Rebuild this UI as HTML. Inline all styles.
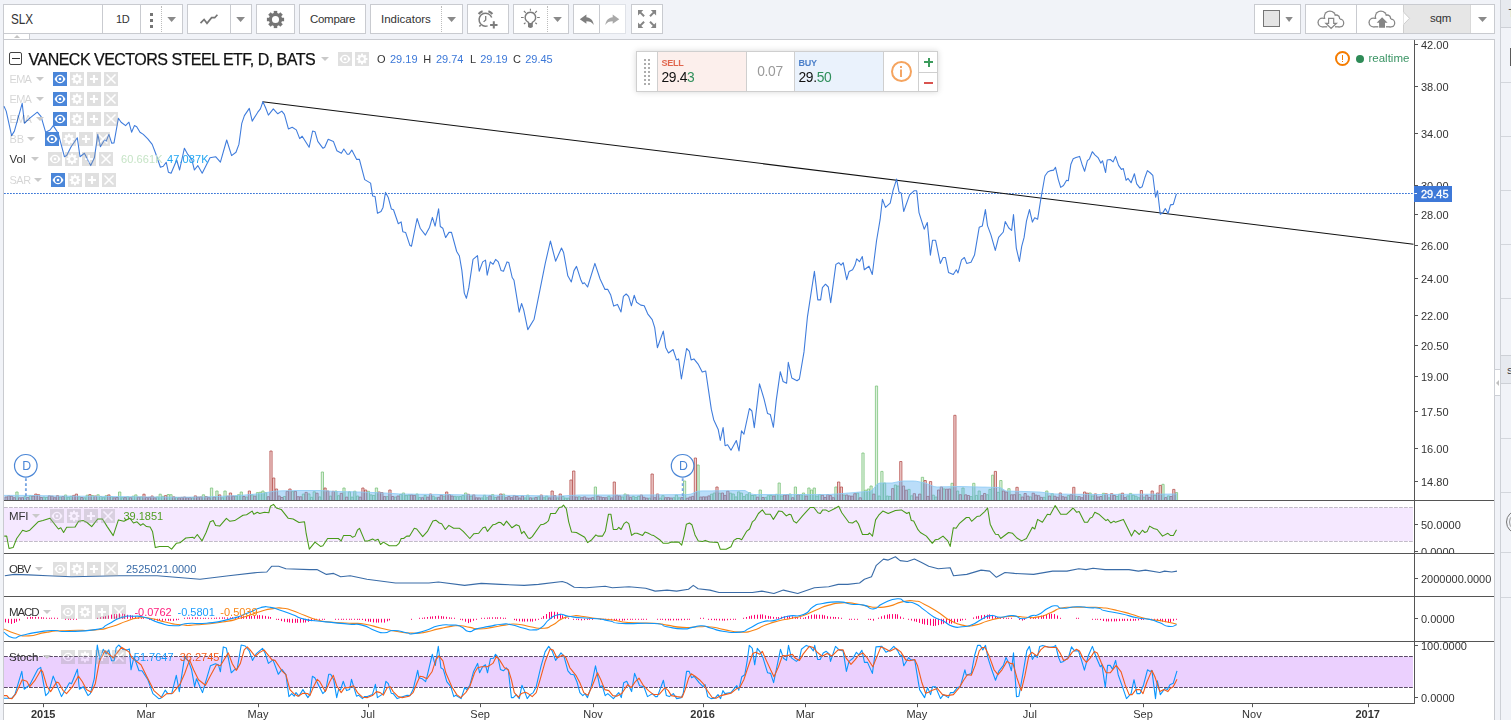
<!DOCTYPE html><html><head><meta charset="utf-8"><title>SLX</title><style>
*{box-sizing:border-box;margin:0;padding:0}
html,body{width:1511px;height:720px;overflow:hidden;background:#f1f3f8;font-family:"Liberation Sans",sans-serif;color:#333}
#root{position:relative;width:1511px;height:720px;overflow:hidden;background:#f1f3f8}
.abs{position:absolute}
.grp{position:absolute;top:4px;height:30px;background:#fff;border:1px solid #c9cbd0}
.sep{position:absolute;top:0;width:1px;height:28px;background:#c9cbd0}
.dsep{position:absolute;top:1px;width:0;height:26px;border-left:1px dotted #bcbcbc}
.tri{position:absolute;width:0;height:0;border-left:4.5px solid transparent;border-right:4.5px solid transparent;border-top:5px solid #8a8a8a}
.tb{position:absolute;font-size:11.5px;color:#333;line-height:28px;top:0;white-space:nowrap}
.lg{position:absolute;font-size:11px;color:#d4d4d4;white-space:nowrap;line-height:14px}
.lb{position:absolute;width:14px;height:14px;background:#999;opacity:.3}
.lb.on{background:#4a86d9;opacity:1}
.ltri{position:absolute;width:0;height:0;border-left:4px solid transparent;border-right:4px solid transparent;border-top:4.5px solid #d4d4d4}
svg{position:absolute;left:0;top:0;overflow:visible}
</style></head><body><div id="root"><div class="grp" style="left:3px;width:180px"><div class="tb" style="left:7px;font-size:14.300px;transform:scaleX(.82);transform-origin:0 50%">SLX</div><div class="sep" style="left:98px"></div><div class="tb" style="left:112px;font-size:11px;letter-spacing:-0.400px">1D</div><div class="sep" style="left:136px"></div><div class="abs" style="left:146px;top:7.500px;width:3px;height:3px;background:#757575;box-shadow:0 6px 0 #757575,0 12px 0 #757575"></div><div class="dsep" style="left:157px"></div></div><div class="grp" style="left:187px;width:65px"><div class="sep" style="left:42px"></div></div><div class="grp" style="left:256px;width:39px"></div><div class="grp" style="left:299px;width:67px"><div class="tb" style="left:10px;letter-spacing:-0.300px">Compare</div></div><div class="grp" style="left:370px;width:93px"><div class="tb" style="left:10px">Indicators</div><div class="dsep" style="left:70px"></div></div><div class="grp" style="left:467px;width:42px"></div><div class="grp" style="left:513px;width:56px"><div class="dsep" style="left:33px"></div></div><div class="grp" style="left:573px;width:27px;border-right:none"></div><div class="grp" style="left:599px;width:27px;border-color:#dfe2e8;border-left-color:#c9cbd0"></div><div class="grp" style="left:631px;width:32px"></div><div class="grp" style="left:1254px;width:47px"><div class="abs" style="left:8px;top:5px;width:17px;height:17px;background:#e4e4e4;border:1px solid #757575"></div></div><div class="grp" style="left:1305px;width:190px"><div class="sep" style="left:50px"></div><div class="abs" style="left:97px;top:0;width:68px;height:28px;background:#e6e6e6"></div><div class="tb" style="left:124px;top:-1px;font-size:11.500px;letter-spacing:-0.200px">sqm</div><div class="sep" style="left:164px;background:#d9d9d9"></div></div><svg width="1511" height="40" viewBox="0 0 1511 40"><path d="M200.500 23.100L204.100 19.500L207 23.300L211.600 17.700H214.700L217.400 14.700" fill="none" stroke="#757575" stroke-width="1.700"/><g transform="translate(275.500 19.500)"><g fill="#757575"><rect x="-1.750" y="-8.600" width="3.500" height="4" transform="rotate(0)"/><rect x="-1.750" y="-8.600" width="3.500" height="4" transform="rotate(45)"/><rect x="-1.750" y="-8.600" width="3.500" height="4" transform="rotate(90)"/><rect x="-1.750" y="-8.600" width="3.500" height="4" transform="rotate(135)"/><rect x="-1.750" y="-8.600" width="3.500" height="4" transform="rotate(180)"/><rect x="-1.750" y="-8.600" width="3.500" height="4" transform="rotate(225)"/><rect x="-1.750" y="-8.600" width="3.500" height="4" transform="rotate(270)"/><rect x="-1.750" y="-8.600" width="3.500" height="4" transform="rotate(315)"/></g><circle r="5.100" fill="none" stroke="#757575" stroke-width="3.100"/></g><g fill="none" stroke="#7c7c7c"><path d="M487.600 25.900A6.500 6.500 0 1 1 491.700 17.600" stroke-width="1.500"/><path d="M478.600 14A9 9 0 0 1 482.600 11.300M488.400 11.300A9 9 0 0 1 492.400 14" stroke-width="2.100"/><path d="M485.700 16V19.900L483.600 21.900" stroke-width="1.300"/><path d="M480.700 24.900L479.400 26.400" stroke-width="1.500"/><path d="M493.800 21.300V28.600M490.100 24.900H497.500" stroke-width="2"/></g><g fill="none" stroke="#7c7c7c"><path d="M528.500 23.600V22.400A5.300 5.300 0 1 1 532.300 22.400V23.600" stroke-width="1.500"/><path d="M530.400 8.800V10.800M523.900 11L525.800 12.900M536.900 11L535 12.900M521 17.500H523.700M537.100 17.500H539.800M523.900 24L525.500 22.700M536.900 24L535.300 22.700" stroke-width="1.100"/></g><path d="M528 23.100H532.800V26.200Q532.800 27.900 530.400 27.900Q528 27.900 528 26.200Z" fill="#7c7c7c"/><path d="M579.800 19.200L586.400 14.600V17.300C590.500 17.600 593.200 20.500 593.700 25C592 22.300 589.800 21.300 586.400 21.300V23.800Z" fill="#7f7f7f"/><path d="M619.300 19.200L612.700 14.600V17.300C608.600 17.600 605.900 20.500 605.400 25C607.100 22.300 609.300 21.300 612.700 21.300V23.800Z" fill="#a9a9a9"/><g fill="#858585" stroke="#858585"><path d="M639.500 11.600L644.100 16.200M654.600 11.600L650 16.200M639.500 26.400L644.100 21.800M654.600 26.400L650 21.800" stroke-width="2" fill="none"/><path d="M638 10.100h5.300l-5.300 5.300zM656.100 10.100h-5.300l5.300 5.300zM638 27.900h5.300l-5.300-5.300zM656.100 27.900h-5.300l5.300-5.300z" stroke="none"/></g><g fill="#878787"><circle cx="1322.4" cy="22.5" r="4.95"/><circle cx="1329.9" cy="16.7" r="6.25"/><circle cx="1336.0" cy="18.6" r="4.25"/><circle cx="1339.8" cy="23.0" r="4.55"/><rect x="1322.4" y="19" width="17.400" height="8.45"/></g><g fill="#fff"><circle cx="1322.4" cy="22.5" r="3.65"/><circle cx="1329.9" cy="16.7" r="4.95"/><circle cx="1336.0" cy="18.6" r="2.95"/><circle cx="1339.8" cy="23.0" r="3.25"/><rect x="1322.4" y="19" width="17.400" height="7.15"/></g><rect x="1327.2" y="25.500" width="7.8" height="2.500" fill="#fff"/><path d="M1328.600 18.400H1333.700V23.300H1336.500L1331.100 28.400L1325.800 23.300H1328.600Z" fill="#fff" stroke="#878787" stroke-width="1.200"/><g fill="#878787"><circle cx="1373.4" cy="22.5" r="4.95"/><circle cx="1380.9" cy="16.7" r="6.25"/><circle cx="1387.0" cy="18.6" r="4.25"/><circle cx="1390.8" cy="23.0" r="4.55"/><rect x="1373.4" y="19" width="17.400" height="8.45"/></g><g fill="#fff"><circle cx="1373.4" cy="22.5" r="3.65"/><circle cx="1380.9" cy="16.7" r="4.95"/><circle cx="1387.0" cy="18.6" r="2.95"/><circle cx="1390.8" cy="23.0" r="3.25"/><rect x="1373.4" y="19" width="17.400" height="7.15"/></g><rect x="1378.3" y="25.500" width="7.7" height="2.500" fill="#fff"/><path d="M1382.100 17.200L1387.600 22.800H1385V27.700H1379.100V22.800H1376.600Z" fill="#858585"/><path d="M167.3 17.100H176L171.65 22Z" fill="#8a8a8a"/><path d="M236.2 17.100H245L240.60 22Z" fill="#8a8a8a"/><path d="M447.2 17.100H456L451.60 22Z" fill="#8a8a8a"/><path d="M553.2 17.100H561.9L557.55 22Z" fill="#8a8a8a"/><path d="M1285.4 17.100H1292.8L1289.10 22Z" fill="#8a8a8a"/><path d="M1478 17.100H1487L1482.50 22Z" fill="#8a8a8a"/><path d="M1403 5V12L1409.500 18.300L1403 24.600V33H1404V5Z" fill="#fff"/><path d="M1403.500 5V12L1409.500 18.300L1403.500 24.600V33" fill="none" stroke="#cfcfcf" stroke-width="1"/></svg><div class="abs" style="left:3px;top:34px;width:27px;height:6px;background:#fff;border:1px solid #c9cbd0;border-top:none"></div><div class="abs" style="left:13.500px;top:35px;width:0;height:0;border-left:3px solid transparent;border-right:3px solid transparent;border-bottom:3px solid #c4c4c4"></div><div class="abs" style="left:3px;top:39px;width:1492px;height:690px;background:#fff;border:1px solid #c9cbd0"></div><div class="abs" style="left:1500px;top:0;width:11px;height:720px;border-left:1px solid #cdd0d6;background:#f1f3f8"></div><div class="abs" style="left:1501px;top:0;width:10px;height:27.500px;background:#e7eaef;border-bottom:1px solid #cdd0d6"></div><div class="abs" style="left:1508.500px;top:6px;font-size:11px;color:#333;line-height:14px">T</div><div class="abs" style="left:1509.500px;top:48px;width:2px;height:17.500px;background:#5a5a5a"></div><div class="abs" style="left:1501px;top:82px;width:10px;height:1px;background:#d3d6dc"></div><div class="abs" style="left:1501px;top:136px;width:10px;height:1px;background:#d3d6dc"></div><div class="abs" style="left:1501px;top:190px;width:10px;height:1px;background:#d3d6dc"></div><div class="abs" style="left:1501px;top:244px;width:10px;height:1px;background:#d3d6dc"></div><div class="abs" style="left:1501px;top:298px;width:10px;height:1px;background:#d3d6dc"></div><div class="abs" style="left:1501px;top:438px;width:10px;height:1px;background:#d3d6dc"></div><div class="abs" style="left:1501px;top:492px;width:10px;height:1px;background:#d3d6dc"></div><div class="abs" style="left:1501px;top:552px;width:10px;height:1px;background:#d3d6dc"></div><div class="abs" style="left:1501px;top:597px;width:10px;height:1px;background:#d3d6dc"></div><div class="abs" style="left:1501px;top:355px;width:10px;height:29px;background:#e6e9ef;border-top:1px solid #cdd0d6;border-bottom:1px solid #cdd0d6"></div><div class="abs" style="left:1507px;top:364px;font-size:9px;color:#333;line-height:14px">S</div><div class="abs" style="left:1506px;top:510px;width:24px;height:24px;border:1.500px solid #777;border-radius:50%"></div><div class="abs" style="left:1509px;top:513px;width:18px;height:18px;border:1px solid #999;border-radius:50%"></div><div class="abs" style="left:1494px;top:369px;width:7px;height:27px;background:#fff;border:1px solid #cdd0d6"></div><div class="abs" style="left:1496px;top:379.500px;width:0;height:0;border-top:3px solid transparent;border-bottom:3px solid transparent;border-right:3px solid #c0c0c0"></div><svg width="1511" height="720" viewBox="0 0 1511 720" style="will-change:transform"><rect x="4" y="508" width="1409" height="33" fill="#f5e8ff"/>
<path d="M4 507.5H1413M4 541.5H1413" stroke="#c3bcc9" stroke-width="1" stroke-dasharray="3.8 1.2" fill="none"/>
<rect x="4" y="657" width="1409" height="30" fill="#ebd0fe"/>
<path d="M4 656.5H1413M4 687.5H1413" stroke="#5a4a66" stroke-width="1" stroke-dasharray="3.8 1.2" fill="none"/>
<path d="M15.8 500.0V492.0H18.1V500.0M23.9 500.0V496.7H26.2V500.0M29.3 500.0V495.8H31.6V500.0M42.8 500.0V497.1H45.1V500.0M45.5 500.0V497.5H47.8V500.0M59.1 500.0V497.0H61.3V500.0M64.5 500.0V495.0H66.7V500.0M67.2 500.0V497.3H69.4V500.0M69.9 500.0V496.3H72.1V500.0M78.0 500.0V496.7H80.2V500.0M83.4 500.0V497.8H85.6V500.0M86.1 500.0V495.2H88.3V500.0M91.5 500.0V495.5H93.7V500.0M96.9 500.0V494.8H99.2V500.0M99.6 500.0V496.5H101.9V500.0M102.3 500.0V497.7H104.6V500.0M105.0 500.0V495.7H107.3V500.0M110.4 500.0V496.8H112.7V500.0M118.5 500.0V492.0H120.8V500.0M121.2 500.0V497.7H123.5V500.0M126.6 500.0V496.8H128.9V500.0M132.0 500.0V496.2H134.3V500.0M134.7 500.0V494.9H137.0V500.0M140.2 500.0V496.9H142.4V500.0M156.4 500.0V496.9H158.6V500.0M159.1 500.0V494.2H161.3V500.0M161.8 500.0V496.3H164.0V500.0M167.2 500.0V494.5H169.4V500.0M169.9 500.0V494.7H172.1V500.0M175.3 500.0V497.6H177.5V500.0M191.5 500.0V497.8H193.8V500.0M202.3 500.0V494.8H204.6V500.0M210.4 500.0V488.0H212.7V500.0M215.8 500.0V491.0H218.1V500.0M221.2 500.0V497.8H223.5V500.0M223.9 500.0V491.0H226.2V500.0M234.8 500.0V496.2H237.0V500.0M237.5 500.0V494.7H239.7V500.0M240.2 500.0V492.0H242.4V500.0M245.6 500.0V497.0H247.8V500.0M251.0 500.0V494.8H253.2V500.0M256.4 500.0V492.6H258.6V500.0M259.1 500.0V492.3H261.3V500.0M261.8 500.0V491.0H264.0V500.0M264.5 500.0V492.6H266.7V500.0M283.4 500.0V496.5H285.7V500.0M291.5 500.0V491.6H293.8V500.0M302.3 500.0V494.1H304.6V500.0M307.7 500.0V493.9H310.0V500.0M310.4 500.0V497.3H312.7V500.0M313.1 500.0V491.8H315.4V500.0M318.5 500.0V496.9H320.8V500.0M321.3 500.0V472.0H323.5V500.0M329.4 500.0V496.1H331.6V500.0M334.8 500.0V491.0H337.0V500.0M337.5 500.0V495.7H339.7V500.0M342.9 500.0V488.0H345.1V500.0M348.3 500.0V491.8H350.5V500.0M351.0 500.0V497.1H353.2V500.0M353.7 500.0V491.2H355.9V500.0M356.4 500.0V496.0H358.6V500.0M367.2 500.0V491.3H369.5V500.0M369.9 500.0V494.9H372.2V500.0M372.6 500.0V495.5H374.9V500.0M375.3 500.0V488.0H377.6V500.0M386.1 500.0V496.6H388.4V500.0M394.2 500.0V497.1H396.5V500.0M399.6 500.0V494.4H401.9V500.0M402.3 500.0V493.0H404.6V500.0M405.0 500.0V495.6H407.3V500.0M407.7 500.0V495.0H410.0V500.0M415.9 500.0V494.0H418.1V500.0M418.6 500.0V497.5H420.8V500.0M424.0 500.0V495.4H426.2V500.0M432.1 500.0V496.2H434.3V500.0M434.8 500.0V497.8H437.0V500.0M442.9 500.0V496.2H445.1V500.0M453.7 500.0V496.4H455.9V500.0M456.4 500.0V496.7H458.7V500.0M459.1 500.0V496.6H461.4V500.0M461.8 500.0V495.6H464.1V500.0M464.5 500.0V493.0H466.8V500.0M469.9 500.0V496.2H472.2V500.0M480.7 500.0V497.9H483.0V500.0M483.4 500.0V495.2H485.7V500.0M486.1 500.0V497.7H488.4V500.0M491.5 500.0V494.6H493.8V500.0M494.2 500.0V497.5H496.5V500.0M502.4 500.0V494.1H504.6V500.0M524.0 500.0V497.9H526.2V500.0M526.7 500.0V495.1H528.9V500.0M532.1 500.0V498.0H534.3V500.0M537.5 500.0V496.8H539.7V500.0M542.9 500.0V497.7H545.1V500.0M545.6 500.0V496.2H547.9V500.0M556.4 500.0V497.9H558.7V500.0M561.8 500.0V496.5H564.1V500.0M564.5 500.0V498.1H566.8V500.0M567.2 500.0V498.1H569.5V500.0M578.0 500.0V496.8H580.3V500.0M594.3 500.0V487.0H596.5V500.0M607.8 500.0V496.1H610.0V500.0M621.3 500.0V497.0H623.5V500.0M624.0 500.0V494.0H626.2V500.0M632.1 500.0V496.3H634.3V500.0M634.8 500.0V497.5H637.0V500.0M637.5 500.0V496.2H639.8V500.0M648.3 500.0V498.1H650.6V500.0M659.1 500.0V498.1H661.4V500.0M661.8 500.0V495.6H664.1V500.0M672.6 500.0V497.7H674.9V500.0M675.3 500.0V495.1H677.6V500.0M678.0 500.0V497.8H680.3V500.0M683.5 500.0V481.0H685.7V500.0M697.0 500.0V465.0H699.2V500.0M710.5 500.0V494.2H712.7V500.0M713.2 500.0V493.0H715.4V500.0M718.6 500.0V493.2H720.8V500.0M729.4 500.0V493.2H731.7V500.0M732.1 500.0V494.0H734.4V500.0M734.8 500.0V496.9H737.1V500.0M737.5 500.0V491.9H739.8V500.0M740.2 500.0V493.1H742.5V500.0M742.9 500.0V496.6H745.2V500.0M745.6 500.0V494.7H747.9V500.0M748.3 500.0V492.6H750.6V500.0M751.0 500.0V495.5H753.3V500.0M753.7 500.0V495.0H756.0V500.0M759.1 500.0V490.0H761.4V500.0M764.5 500.0V497.6H766.8V500.0M767.2 500.0V495.7H769.5V500.0M769.9 500.0V495.3H772.2V500.0M775.4 500.0V494.3H777.6V500.0M778.1 500.0V483.0H780.3V500.0M780.8 500.0V496.0H783.0V500.0M788.9 500.0V494.0H791.1V500.0M794.3 500.0V487.0H796.5V500.0M799.7 500.0V494.7H801.9V500.0M802.4 500.0V493.0H804.6V500.0M807.8 500.0V488.0H810.0V500.0M810.5 500.0V490.0H812.7V500.0M813.2 500.0V488.0H815.4V500.0M815.9 500.0V496.1H818.1V500.0M818.6 500.0V494.5H820.9V500.0M834.8 500.0V487.0H837.1V500.0M842.9 500.0V495.0H845.2V500.0M856.4 500.0V493.1H858.7V500.0M861.9 500.0V453.0H864.1V500.0M864.6 500.0V490.2H866.8V500.0M867.3 500.0V489.0H869.5V500.0M870.0 500.0V486.0H872.2V500.0M875.4 500.0V386.0H877.6V500.0M878.1 500.0V496.0H880.3V500.0M880.8 500.0V471.4H883.0V500.0M883.5 500.0V483.0H885.7V500.0M886.2 500.0V496.0H888.4V500.0M888.9 500.0V496.4H891.1V500.0M894.3 500.0V485.0H896.5V500.0M897.0 500.0V486.0H899.2V500.0M907.8 500.0V489.4H910.1V500.0M910.5 500.0V495.8H912.8V500.0M921.3 500.0V477.3H923.6V500.0M932.1 500.0V495.2H934.4V500.0M934.8 500.0V497.0H937.1V500.0M942.9 500.0V488.9H945.2V500.0M951.0 500.0V483.3H953.3V500.0M956.5 500.0V491.0H958.7V500.0M961.9 500.0V488.0H964.1V500.0M970.0 500.0V496.6H972.2V500.0M972.7 500.0V483.3H974.9V500.0M975.4 500.0V495.4H977.6V500.0M978.1 500.0V491.0H980.3V500.0M986.2 500.0V494.7H988.4V500.0M988.9 500.0V489.4H991.1V500.0M991.6 500.0V475.2H993.8V500.0M997.0 500.0V492.3H999.3V500.0M999.7 500.0V480.5H1002.0V500.0M1007.8 500.0V488.7H1010.1V500.0M1018.6 500.0V494.6H1020.9V500.0M1029.4 500.0V496.9H1031.7V500.0M1043.0 500.0V497.3H1045.2V500.0M1045.7 500.0V491.0H1047.9V500.0M1051.1 500.0V493.6H1053.3V500.0M1067.3 500.0V495.6H1069.5V500.0M1075.4 500.0V496.4H1077.6V500.0M1088.9 500.0V493.0H1091.2V500.0M1091.6 500.0V496.0H1093.9V500.0M1102.4 500.0V493.3H1104.7V500.0M1107.8 500.0V497.8H1110.1V500.0M1115.9 500.0V496.5H1118.2V500.0M1118.6 500.0V494.1H1120.9V500.0M1126.7 500.0V495.9H1129.0V500.0M1129.4 500.0V493.4H1131.7V500.0M1132.2 500.0V495.2H1134.4V500.0M1134.9 500.0V496.2H1137.1V500.0M1137.6 500.0V497.7H1139.8V500.0M1143.0 500.0V497.2H1145.2V500.0M1153.8 500.0V495.3H1156.0V500.0M1161.9 500.0V484.3H1164.1V500.0M1167.3 500.0V495.9H1169.5V500.0M1175.4 500.0V492.6H1177.6V500.0" fill="#def0de" stroke="#7cc47c" stroke-width="0.8"/>
<path d="M5.0 500.0V497.0H7.2V500.0M7.7 500.0V495.7H10.0V500.0M10.4 500.0V496.2H12.7V500.0M13.1 500.0V497.7H15.4V500.0M18.5 500.0V497.8H20.8V500.0M21.2 500.0V497.7H23.5V500.0M26.6 500.0V497.6H28.9V500.0M32.0 500.0V496.0H34.3V500.0M34.7 500.0V494.1H37.0V500.0M37.4 500.0V494.7H39.7V500.0M40.1 500.0V497.5H42.4V500.0M48.2 500.0V495.8H50.5V500.0M51.0 500.0V496.2H53.2V500.0M53.7 500.0V497.7H55.9V500.0M56.4 500.0V495.6H58.6V500.0M61.8 500.0V496.5H64.0V500.0M72.6 500.0V495.4H74.8V500.0M75.3 500.0V494.1H77.5V500.0M80.7 500.0V497.5H82.9V500.0M88.8 500.0V494.6H91.0V500.0M94.2 500.0V496.0H96.4V500.0M107.7 500.0V494.9H110.0V500.0M113.1 500.0V497.8H115.4V500.0M115.8 500.0V497.5H118.1V500.0M123.9 500.0V497.6H126.2V500.0M129.3 500.0V497.7H131.6V500.0M137.4 500.0V497.2H139.7V500.0M142.9 500.0V494.2H145.1V500.0M145.6 500.0V497.5H147.8V500.0M148.3 500.0V497.3H150.5V500.0M151.0 500.0V496.0H153.2V500.0M153.7 500.0V497.8H155.9V500.0M164.5 500.0V495.6H166.7V500.0M172.6 500.0V496.8H174.8V500.0M178.0 500.0V497.7H180.2V500.0M180.7 500.0V497.4H182.9V500.0M183.4 500.0V497.0H185.6V500.0M186.1 500.0V497.8H188.4V500.0M188.8 500.0V497.6H191.1V500.0M194.2 500.0V495.9H196.5V500.0M196.9 500.0V497.2H199.2V500.0M199.6 500.0V496.9H201.9V500.0M205.0 500.0V496.5H207.3V500.0M207.7 500.0V497.7H210.0V500.0M213.1 500.0V497.0H215.4V500.0M218.5 500.0V494.9H220.8V500.0M226.6 500.0V496.2H228.9V500.0M229.3 500.0V493.0H231.6V500.0M232.1 500.0V496.2H234.3V500.0M242.9 500.0V496.5H245.1V500.0M248.3 500.0V491.0H250.5V500.0M253.7 500.0V496.1H255.9V500.0M267.2 500.0V496.7H269.4V500.0M269.9 500.0V451.0H272.1V500.0M272.6 500.0V478.0H274.8V500.0M275.3 500.0V489.0H277.6V500.0M278.0 500.0V496.0H280.3V500.0M280.7 500.0V497.5H283.0V500.0M286.1 500.0V491.4H288.4V500.0M288.8 500.0V489.0H291.1V500.0M294.2 500.0V491.4H296.5V500.0M296.9 500.0V496.7H299.2V500.0M299.6 500.0V496.8H301.9V500.0M305.0 500.0V492.4H307.3V500.0M315.8 500.0V493.2H318.1V500.0M324.0 500.0V488.0H326.2V500.0M326.7 500.0V491.0H328.9V500.0M332.1 500.0V491.3H334.3V500.0M340.2 500.0V493.4H342.4V500.0M345.6 500.0V497.1H347.8V500.0M359.1 500.0V497.1H361.3V500.0M361.8 500.0V488.0H364.0V500.0M364.5 500.0V490.0H366.7V500.0M378.0 500.0V492.0H380.3V500.0M380.7 500.0V492.5H383.0V500.0M383.4 500.0V496.6H385.7V500.0M388.8 500.0V490.0H391.1V500.0M391.5 500.0V496.5H393.8V500.0M396.9 500.0V496.0H399.2V500.0M410.4 500.0V494.9H412.7V500.0M413.2 500.0V495.4H415.4V500.0M421.3 500.0V497.7H423.5V500.0M426.7 500.0V497.2H428.9V500.0M429.4 500.0V494.0H431.6V500.0M437.5 500.0V497.4H439.7V500.0M440.2 500.0V495.2H442.4V500.0M445.6 500.0V492.0H447.8V500.0M448.3 500.0V494.5H450.5V500.0M451.0 500.0V496.0H453.2V500.0M467.2 500.0V494.3H469.5V500.0M472.6 500.0V494.9H474.9V500.0M475.3 500.0V497.8H477.6V500.0M478.0 500.0V497.9H480.3V500.0M488.8 500.0V495.8H491.1V500.0M496.9 500.0V496.9H499.2V500.0M499.6 500.0V494.0H501.9V500.0M505.1 500.0V497.7H507.3V500.0M507.8 500.0V496.4H510.0V500.0M510.5 500.0V497.6H512.7V500.0M513.2 500.0V495.5H515.4V500.0M515.9 500.0V496.3H518.1V500.0M518.6 500.0V498.0H520.8V500.0M521.3 500.0V495.9H523.5V500.0M529.4 500.0V497.8H531.6V500.0M534.8 500.0V497.4H537.0V500.0M540.2 500.0V495.0H542.4V500.0M548.3 500.0V497.9H550.6V500.0M551.0 500.0V491.0H553.3V500.0M553.7 500.0V495.6H556.0V500.0M559.1 500.0V494.0H561.4V500.0M569.9 500.0V480.0H572.2V500.0M572.6 500.0V471.0H574.9V500.0M575.3 500.0V497.1H577.6V500.0M580.7 500.0V497.7H583.0V500.0M583.4 500.0V496.9H585.7V500.0M586.1 500.0V498.1H588.4V500.0M588.8 500.0V498.2H591.1V500.0M591.6 500.0V497.6H593.8V500.0M597.0 500.0V496.0H599.2V500.0M599.7 500.0V497.0H601.9V500.0M602.4 500.0V497.5H604.6V500.0M605.1 500.0V497.7H607.3V500.0M610.5 500.0V497.9H612.7V500.0M613.2 500.0V482.0H615.4V500.0M615.9 500.0V495.3H618.1V500.0M618.6 500.0V495.8H620.8V500.0M626.7 500.0V495.0H628.9V500.0M629.4 500.0V497.3H631.6V500.0M640.2 500.0V495.0H642.5V500.0M642.9 500.0V497.3H645.2V500.0M645.6 500.0V498.1H647.9V500.0M651.0 500.0V474.0H653.3V500.0M653.7 500.0V497.7H656.0V500.0M656.4 500.0V494.0H658.7V500.0M664.5 500.0V497.7H666.8V500.0M667.2 500.0V497.6H669.5V500.0M669.9 500.0V498.0H672.2V500.0M680.8 500.0V497.6H683.0V500.0M686.2 500.0V498.2H688.4V500.0M688.9 500.0V497.1H691.1V500.0M691.6 500.0V496.4H693.8V500.0M694.3 500.0V458.0H696.5V500.0M699.7 500.0V497.0H701.9V500.0M702.4 500.0V496.8H704.6V500.0M705.1 500.0V496.9H707.3V500.0M707.8 500.0V495.9H710.0V500.0M715.9 500.0V487.0H718.1V500.0M721.3 500.0V493.0H723.5V500.0M724.0 500.0V495.4H726.2V500.0M726.7 500.0V491.1H729.0V500.0M756.4 500.0V497.2H758.7V500.0M761.8 500.0V497.5H764.1V500.0M772.7 500.0V496.0H774.9V500.0M783.5 500.0V495.1H785.7V500.0M786.2 500.0V494.7H788.4V500.0M791.6 500.0V497.7H793.8V500.0M797.0 500.0V494.7H799.2V500.0M805.1 500.0V496.0H807.3V500.0M821.3 500.0V495.2H823.6V500.0M824.0 500.0V497.5H826.3V500.0M826.7 500.0V494.6H829.0V500.0M829.4 500.0V495.6H831.7V500.0M832.1 500.0V497.7H834.4V500.0M837.5 500.0V482.0H839.8V500.0M840.2 500.0V487.0H842.5V500.0M845.6 500.0V495.0H847.9V500.0M848.3 500.0V495.9H850.6V500.0M851.0 500.0V496.2H853.3V500.0M853.7 500.0V493.7H856.0V500.0M859.1 500.0V497.8H861.4V500.0M872.7 500.0V494.1H874.9V500.0M891.6 500.0V488.6H893.8V500.0M899.7 500.0V461.5H901.9V500.0M902.4 500.0V486.0H904.6V500.0M905.1 500.0V490.2H907.3V500.0M913.2 500.0V493.7H915.5V500.0M915.9 500.0V497.0H918.2V500.0M918.6 500.0V494.1H920.9V500.0M924.0 500.0V480.5H926.3V500.0M926.7 500.0V496.4H929.0V500.0M929.4 500.0V481.6H931.7V500.0M937.5 500.0V490.0H939.8V500.0M940.2 500.0V487.0H942.5V500.0M945.6 500.0V489.2H947.9V500.0M948.3 500.0V489.0H950.6V500.0M953.8 500.0V415.3H956.0V500.0M959.2 500.0V494.7H961.4V500.0M964.6 500.0V494.8H966.8V500.0M967.3 500.0V495.5H969.5V500.0M980.8 500.0V495.7H983.0V500.0M983.5 500.0V493.5H985.7V500.0M994.3 500.0V471.4H996.5V500.0M1002.4 500.0V491.0H1004.7V500.0M1005.1 500.0V492.0H1007.4V500.0M1010.5 500.0V494.8H1012.8V500.0M1013.2 500.0V494.7H1015.5V500.0M1015.9 500.0V487.3H1018.2V500.0M1021.3 500.0V497.0H1023.6V500.0M1024.0 500.0V493.5H1026.3V500.0M1026.7 500.0V496.1H1029.0V500.0M1032.1 500.0V493.2H1034.4V500.0M1034.8 500.0V495.1H1037.1V500.0M1037.5 500.0V495.7H1039.8V500.0M1040.2 500.0V497.4H1042.5V500.0M1048.4 500.0V496.0H1050.6V500.0M1053.8 500.0V496.2H1056.0V500.0M1056.5 500.0V497.3H1058.7V500.0M1059.2 500.0V493.0H1061.4V500.0M1061.9 500.0V496.7H1064.1V500.0M1064.6 500.0V497.2H1066.8V500.0M1070.0 500.0V494.6H1072.2V500.0M1072.7 500.0V487.3H1074.9V500.0M1078.1 500.0V496.6H1080.3V500.0M1080.8 500.0V497.7H1083.0V500.0M1083.5 500.0V492.0H1085.7V500.0M1086.2 500.0V493.2H1088.5V500.0M1094.3 500.0V493.9H1096.6V500.0M1097.0 500.0V497.0H1099.3V500.0M1099.7 500.0V496.5H1102.0V500.0M1105.1 500.0V493.8H1107.4V500.0M1110.5 500.0V493.7H1112.8V500.0M1113.2 500.0V495.5H1115.5V500.0M1121.3 500.0V493.2H1123.6V500.0M1124.0 500.0V497.6H1126.3V500.0M1140.3 500.0V490.5H1142.5V500.0M1145.7 500.0V495.2H1147.9V500.0M1148.4 500.0V497.5H1150.6V500.0M1151.1 500.0V491.0H1153.3V500.0M1156.5 500.0V493.0H1158.7V500.0M1159.2 500.0V485.4H1161.4V500.0M1164.6 500.0V497.6H1166.8V500.0M1170.0 500.0V496.5H1172.2V500.0M1172.7 500.0V489.4H1174.9V500.0" fill="#f0d0d0" stroke="#b5504e" stroke-width="0.8"/>
<path d="M4 500.0 L4.0,495.4 L7.0,495.4 L10.0,495.4 L13.0,495.4 L16.0,495.4 L19.0,495.4 L22.0,495.4 L25.0,495.4 L28.0,495.4 L31.0,495.4 L34.0,495.5 L37.0,495.5 L40.0,495.6 L43.0,495.7 L46.0,495.7 L49.0,495.8 L52.0,495.8 L55.0,495.9 L58.0,496.0 L61.0,496.0 L64.0,496.0 L67.0,496.1 L70.0,496.1 L73.0,496.1 L76.0,496.2 L79.0,496.2 L82.0,496.2 L85.0,496.2 L88.0,496.3 L91.0,496.3 L94.0,496.3 L97.0,496.4 L100.0,496.4 L103.0,496.4 L106.0,496.5 L109.0,496.5 L112.0,496.5 L115.0,496.6 L118.0,496.6 L121.0,496.6 L124.0,496.6 L127.0,496.7 L130.0,496.7 L133.0,496.7 L136.0,496.8 L139.0,496.8 L142.0,496.8 L145.0,496.9 L148.0,496.9 L151.0,496.9 L154.0,496.9 L157.0,497.0 L160.0,497.0 L163.0,497.0 L166.0,497.1 L169.0,497.1 L172.0,497.1 L175.0,497.1 L178.0,497.2 L181.0,497.2 L184.0,497.1 L187.0,497.1 L190.0,497.1 L193.0,497.0 L196.0,497.0 L199.0,496.9 L202.0,496.9 L205.0,496.9 L208.0,496.8 L211.0,496.8 L214.0,496.6 L217.0,496.5 L220.0,496.3 L223.0,496.2 L226.0,496.1 L229.0,495.9 L232.0,495.8 L235.0,495.6 L238.0,495.5 L241.0,495.3 L244.0,495.1 L247.0,494.8 L250.0,494.5 L253.0,494.3 L256.0,494.0 L259.0,493.8 L262.0,493.5 L265.0,492.9 L268.0,492.3 L271.0,491.8 L274.0,491.2 L277.0,491.0 L280.0,490.9 L283.0,490.8 L286.0,490.8 L289.0,490.7 L292.0,490.7 L295.0,490.6 L298.0,490.5 L301.0,490.5 L304.0,490.5 L307.0,490.5 L310.0,490.5 L313.0,490.5 L316.0,490.5 L319.0,490.5 L322.0,490.6 L325.0,490.8 L328.0,491.0 L331.0,491.2 L334.0,491.4 L337.0,491.5 L340.0,491.6 L343.0,491.7 L346.0,491.7 L349.0,491.8 L352.0,491.8 L355.0,491.9 L358.0,492.0 L361.0,492.0 L364.0,492.2 L367.0,492.3 L370.0,492.4 L373.0,492.5 L376.0,492.6 L379.0,492.8 L382.0,492.9 L385.0,493.0 L388.0,493.2 L391.0,493.4 L394.0,493.6 L397.0,493.8 L400.0,494.0 L403.0,494.0 L406.0,494.1 L409.0,494.1 L412.0,494.1 L415.0,494.2 L418.0,494.2 L421.0,494.3 L424.0,494.3 L427.0,494.3 L430.0,494.4 L433.0,494.4 L436.0,494.4 L439.0,494.5 L442.0,494.5 L445.0,494.6 L448.0,494.6 L451.0,494.6 L454.0,494.7 L457.0,494.7 L460.0,494.8 L463.0,494.8 L466.0,494.8 L469.0,494.9 L472.0,494.9 L475.0,494.9 L478.0,495.0 L481.0,495.0 L484.0,495.1 L487.0,495.1 L490.0,495.1 L493.0,495.2 L496.0,495.2 L499.0,495.2 L502.0,495.3 L505.0,495.3 L508.0,495.4 L511.0,495.4 L514.0,495.4 L517.0,495.5 L520.0,495.5 L523.0,495.5 L526.0,495.6 L529.0,495.6 L532.0,495.6 L535.0,495.7 L538.0,495.7 L541.0,495.8 L544.0,495.8 L547.0,495.8 L550.0,495.9 L553.0,495.9 L556.0,495.9 L559.0,496.0 L562.0,495.9 L565.0,495.8 L568.0,495.6 L571.0,495.4 L574.0,495.3 L577.0,495.1 L580.0,495.0 L583.0,495.0 L586.0,495.0 L589.0,495.0 L592.0,495.0 L595.0,495.0 L598.0,495.0 L601.0,495.0 L604.0,495.0 L607.0,495.0 L610.0,495.0 L613.0,495.0 L616.0,495.0 L619.0,495.0 L622.0,495.0 L625.0,495.0 L628.0,495.0 L631.0,495.0 L634.0,495.0 L637.0,495.0 L640.0,495.0 L643.0,495.0 L646.0,494.9 L649.0,494.9 L652.0,494.9 L655.0,494.9 L658.0,494.8 L661.0,494.8 L664.0,494.8 L667.0,494.7 L670.0,494.7 L673.0,494.7 L676.0,494.6 L679.0,494.6 L682.0,494.6 L685.0,494.6 L688.0,494.5 L691.0,494.1 L694.0,492.8 L697.0,491.4 L700.0,491.0 L703.0,490.9 L706.0,490.9 L709.0,490.9 L712.0,490.9 L715.0,490.8 L718.0,490.8 L721.0,490.8 L724.0,490.7 L727.0,490.7 L730.0,490.7 L733.0,490.6 L736.0,490.6 L739.0,490.6 L742.0,490.5 L745.0,490.5 L748.0,492.2 L751.0,493.9 L754.0,494.5 L757.0,494.5 L760.0,494.5 L763.0,494.5 L766.0,494.5 L769.0,494.5 L772.0,494.5 L775.0,494.5 L778.0,494.5 L781.0,494.5 L784.0,494.5 L787.0,494.5 L790.0,494.5 L793.0,494.5 L796.0,494.5 L799.0,494.5 L802.0,494.5 L805.0,494.5 L808.0,494.5 L811.0,494.5 L814.0,494.5 L817.0,494.5 L820.0,494.5 L823.0,494.5 L826.0,494.5 L829.0,494.5 L832.0,494.3 L835.0,494.1 L838.0,493.9 L841.0,493.6 L844.0,493.4 L847.0,493.1 L850.0,492.9 L853.0,492.7 L856.0,492.4 L859.0,492.1 L862.0,491.9 L865.0,491.6 L868.0,491.4 L871.0,491.1 L874.0,488.3 L877.0,484.3 L880.0,483.0 L883.0,483.0 L886.0,483.0 L889.0,483.0 L892.0,483.0 L895.0,482.4 L898.0,481.8 L901.0,481.2 L904.0,481.0 L907.0,481.0 L910.0,481.0 L913.0,481.0 L916.0,481.2 L919.0,481.8 L922.0,482.4 L925.0,483.0 L928.0,484.2 L931.0,485.4 L934.0,486.6 L937.0,487.0 L940.0,486.9 L943.0,486.8 L946.0,486.8 L949.0,486.7 L952.0,486.7 L955.0,486.6 L958.0,486.5 L961.0,486.5 L964.0,486.6 L967.0,486.7 L970.0,486.8 L973.0,486.8 L976.0,486.9 L979.0,487.0 L982.0,487.1 L985.0,487.1 L988.0,487.2 L991.0,487.3 L994.0,487.4 L997.0,487.4 L1000.0,487.5 L1003.0,489.2 L1006.0,491.0 L1009.0,491.1 L1012.0,491.2 L1015.0,491.3 L1018.0,491.4 L1021.0,491.4 L1024.0,491.5 L1027.0,491.6 L1030.0,491.7 L1033.0,491.8 L1036.0,491.9 L1039.0,492.0 L1042.0,492.3 L1045.0,492.7 L1048.0,493.1 L1051.0,493.5 L1054.0,493.9 L1057.0,494.0 L1060.0,494.1 L1063.0,494.1 L1066.0,494.1 L1069.0,494.2 L1072.0,494.2 L1075.0,494.2 L1078.0,494.3 L1081.0,494.3 L1084.0,494.3 L1087.0,494.4 L1090.0,494.4 L1093.0,494.4 L1096.0,494.5 L1099.0,494.5 L1102.0,494.5 L1105.0,494.5 L1108.0,494.4 L1111.0,494.4 L1114.0,494.4 L1117.0,494.4 L1120.0,494.4 L1123.0,494.4 L1126.0,494.3 L1129.0,494.3 L1132.0,494.3 L1135.0,494.3 L1138.0,494.3 L1141.0,494.2 L1144.0,494.2 L1147.0,494.2 L1150.0,494.2 L1153.0,494.2 L1156.0,494.1 L1159.0,494.1 L1162.0,494.1 L1165.0,494.1 L1168.0,494.1 L1171.0,494.0 L1174.0,494.0 L1177.0,494.0 L1177 500.0Z" fill="#5aaef0" fill-opacity="0.42" stroke="none"/>
<polyline points="4.0,495.4 7.0,495.4 10.0,495.4 13.0,495.4 16.0,495.4 19.0,495.4 22.0,495.4 25.0,495.4 28.0,495.4 31.0,495.4 34.0,495.5 37.0,495.5 40.0,495.6 43.0,495.7 46.0,495.7 49.0,495.8 52.0,495.8 55.0,495.9 58.0,496.0 61.0,496.0 64.0,496.0 67.0,496.1 70.0,496.1 73.0,496.1 76.0,496.2 79.0,496.2 82.0,496.2 85.0,496.2 88.0,496.3 91.0,496.3 94.0,496.3 97.0,496.4 100.0,496.4 103.0,496.4 106.0,496.5 109.0,496.5 112.0,496.5 115.0,496.6 118.0,496.6 121.0,496.6 124.0,496.6 127.0,496.7 130.0,496.7 133.0,496.7 136.0,496.8 139.0,496.8 142.0,496.8 145.0,496.9 148.0,496.9 151.0,496.9 154.0,496.9 157.0,497.0 160.0,497.0 163.0,497.0 166.0,497.1 169.0,497.1 172.0,497.1 175.0,497.1 178.0,497.2 181.0,497.2 184.0,497.1 187.0,497.1 190.0,497.1 193.0,497.0 196.0,497.0 199.0,496.9 202.0,496.9 205.0,496.9 208.0,496.8 211.0,496.8 214.0,496.6 217.0,496.5 220.0,496.3 223.0,496.2 226.0,496.1 229.0,495.9 232.0,495.8 235.0,495.6 238.0,495.5 241.0,495.3 244.0,495.1 247.0,494.8 250.0,494.5 253.0,494.3 256.0,494.0 259.0,493.8 262.0,493.5 265.0,492.9 268.0,492.3 271.0,491.8 274.0,491.2 277.0,491.0 280.0,490.9 283.0,490.8 286.0,490.8 289.0,490.7 292.0,490.7 295.0,490.6 298.0,490.5 301.0,490.5 304.0,490.5 307.0,490.5 310.0,490.5 313.0,490.5 316.0,490.5 319.0,490.5 322.0,490.6 325.0,490.8 328.0,491.0 331.0,491.2 334.0,491.4 337.0,491.5 340.0,491.6 343.0,491.7 346.0,491.7 349.0,491.8 352.0,491.8 355.0,491.9 358.0,492.0 361.0,492.0 364.0,492.2 367.0,492.3 370.0,492.4 373.0,492.5 376.0,492.6 379.0,492.8 382.0,492.9 385.0,493.0 388.0,493.2 391.0,493.4 394.0,493.6 397.0,493.8 400.0,494.0 403.0,494.0 406.0,494.1 409.0,494.1 412.0,494.1 415.0,494.2 418.0,494.2 421.0,494.3 424.0,494.3 427.0,494.3 430.0,494.4 433.0,494.4 436.0,494.4 439.0,494.5 442.0,494.5 445.0,494.6 448.0,494.6 451.0,494.6 454.0,494.7 457.0,494.7 460.0,494.8 463.0,494.8 466.0,494.8 469.0,494.9 472.0,494.9 475.0,494.9 478.0,495.0 481.0,495.0 484.0,495.1 487.0,495.1 490.0,495.1 493.0,495.2 496.0,495.2 499.0,495.2 502.0,495.3 505.0,495.3 508.0,495.4 511.0,495.4 514.0,495.4 517.0,495.5 520.0,495.5 523.0,495.5 526.0,495.6 529.0,495.6 532.0,495.6 535.0,495.7 538.0,495.7 541.0,495.8 544.0,495.8 547.0,495.8 550.0,495.9 553.0,495.9 556.0,495.9 559.0,496.0 562.0,495.9 565.0,495.8 568.0,495.6 571.0,495.4 574.0,495.3 577.0,495.1 580.0,495.0 583.0,495.0 586.0,495.0 589.0,495.0 592.0,495.0 595.0,495.0 598.0,495.0 601.0,495.0 604.0,495.0 607.0,495.0 610.0,495.0 613.0,495.0 616.0,495.0 619.0,495.0 622.0,495.0 625.0,495.0 628.0,495.0 631.0,495.0 634.0,495.0 637.0,495.0 640.0,495.0 643.0,495.0 646.0,494.9 649.0,494.9 652.0,494.9 655.0,494.9 658.0,494.8 661.0,494.8 664.0,494.8 667.0,494.7 670.0,494.7 673.0,494.7 676.0,494.6 679.0,494.6 682.0,494.6 685.0,494.6 688.0,494.5 691.0,494.1 694.0,492.8 697.0,491.4 700.0,491.0 703.0,490.9 706.0,490.9 709.0,490.9 712.0,490.9 715.0,490.8 718.0,490.8 721.0,490.8 724.0,490.7 727.0,490.7 730.0,490.7 733.0,490.6 736.0,490.6 739.0,490.6 742.0,490.5 745.0,490.5 748.0,492.2 751.0,493.9 754.0,494.5 757.0,494.5 760.0,494.5 763.0,494.5 766.0,494.5 769.0,494.5 772.0,494.5 775.0,494.5 778.0,494.5 781.0,494.5 784.0,494.5 787.0,494.5 790.0,494.5 793.0,494.5 796.0,494.5 799.0,494.5 802.0,494.5 805.0,494.5 808.0,494.5 811.0,494.5 814.0,494.5 817.0,494.5 820.0,494.5 823.0,494.5 826.0,494.5 829.0,494.5 832.0,494.3 835.0,494.1 838.0,493.9 841.0,493.6 844.0,493.4 847.0,493.1 850.0,492.9 853.0,492.7 856.0,492.4 859.0,492.1 862.0,491.9 865.0,491.6 868.0,491.4 871.0,491.1 874.0,488.3 877.0,484.3 880.0,483.0 883.0,483.0 886.0,483.0 889.0,483.0 892.0,483.0 895.0,482.4 898.0,481.8 901.0,481.2 904.0,481.0 907.0,481.0 910.0,481.0 913.0,481.0 916.0,481.2 919.0,481.8 922.0,482.4 925.0,483.0 928.0,484.2 931.0,485.4 934.0,486.6 937.0,487.0 940.0,486.9 943.0,486.8 946.0,486.8 949.0,486.7 952.0,486.7 955.0,486.6 958.0,486.5 961.0,486.5 964.0,486.6 967.0,486.7 970.0,486.8 973.0,486.8 976.0,486.9 979.0,487.0 982.0,487.1 985.0,487.1 988.0,487.2 991.0,487.3 994.0,487.4 997.0,487.4 1000.0,487.5 1003.0,489.2 1006.0,491.0 1009.0,491.1 1012.0,491.2 1015.0,491.3 1018.0,491.4 1021.0,491.4 1024.0,491.5 1027.0,491.6 1030.0,491.7 1033.0,491.8 1036.0,491.9 1039.0,492.0 1042.0,492.3 1045.0,492.7 1048.0,493.1 1051.0,493.5 1054.0,493.9 1057.0,494.0 1060.0,494.1 1063.0,494.1 1066.0,494.1 1069.0,494.2 1072.0,494.2 1075.0,494.2 1078.0,494.3 1081.0,494.3 1084.0,494.3 1087.0,494.4 1090.0,494.4 1093.0,494.4 1096.0,494.5 1099.0,494.5 1102.0,494.5 1105.0,494.5 1108.0,494.4 1111.0,494.4 1114.0,494.4 1117.0,494.4 1120.0,494.4 1123.0,494.4 1126.0,494.3 1129.0,494.3 1132.0,494.3 1135.0,494.3 1138.0,494.3 1141.0,494.2 1144.0,494.2 1147.0,494.2 1150.0,494.2 1153.0,494.2 1156.0,494.1 1159.0,494.1 1162.0,494.1 1165.0,494.1 1168.0,494.1 1171.0,494.0 1174.0,494.0 1177.0,494.0" fill="none" stroke="#8ccaf5" stroke-width="1" stroke-opacity="0.8"/>
<path d="M25.900000000000002 478.3V499" stroke="#79a6e2" stroke-width="1.9" stroke-dasharray="2.8 2.2" fill="none"/>
<circle cx="25.8" cy="465.8" r="11.3" fill="#fff" stroke="#4a86d6" stroke-width="1.2"/>
<text x="26.6" y="470.2" text-anchor="middle" font-family="Liberation Sans" font-size="12.3" fill="#4a86d6">D</text>
<path d="M682.7 478.3V499" stroke="#79a6e2" stroke-width="1.9" stroke-dasharray="2.8 2.2" fill="none"/>
<circle cx="682.6" cy="465.8" r="11.3" fill="#fff" stroke="#4a86d6" stroke-width="1.2"/>
<text x="683.4" y="470.2" text-anchor="middle" font-family="Liberation Sans" font-size="12.3" fill="#4a86d6">D</text>
<path d="M4 193.5H1414" stroke="#3c78d8" stroke-width="1" stroke-dasharray="1.8 1.2" fill="none"/>
<path d="M262.5 101.8L1413.5 244.2" stroke="#111" stroke-width="1.05" fill="none"/>
<polyline points="4.0,106.2 6.2,111.1 11.6,135.6 14.4,131.1 22.2,103.3 24.4,123.3 28.9,118.9 37.3,112.2 41.1,116.7 45.6,132.2 50.0,130.0 53.3,125.6 58.2,133.3 64.4,156.7 66.7,155.6 71.1,146.7 77.3,137.8 80.0,156.7 84.4,153.3 90.7,165.6 94.4,157.8 97.8,134.4 100.4,146.7 104.4,140.0 106.2,141.1 108.9,134.4 111.8,143.3 114.0,142.9 118.4,118.2 121.1,122.2 125.6,125.6 128.9,122.2 131.6,132.2 134.4,125.6 136.7,126.7 140.0,132.2 143.3,134.4 147.8,138.9 152.2,144.4 155.6,153.3 160.4,167.3 163.3,166.2 166.2,162.2 168.4,172.2 171.1,173.3 176.7,160.0 179.6,170.0 184.4,148.2 187.8,154.4 191.6,158.9 194.4,170.0 197.8,165.6 202.2,173.3 210.0,157.8 215.6,156.7 220.4,162.2 226.7,140.0 231.6,155.6 236.0,152.2 238.9,144.4 241.8,123.3 244.4,115.6 249.3,108.4 252.2,121.1 257.8,112.2 260.4,108.9 262.9,101.8 265.6,107.8 268.4,115.1 273.3,108.9 277.8,113.8 281.8,111.1 284.4,114.4 288.4,128.9 292.2,127.3 296.3,129.9 299.7,138.6 302.2,136.2 309.1,147.3 312.6,131.0 315.0,131.7 317.8,141.4 323.0,148.3 324.7,147.3 328.2,139.3 333.4,141.4 336.9,150.8 341.4,153.2 343.8,149.0 347.3,154.2 349.0,154.2 351.8,150.1 356.7,159.4 359.4,159.4 364.7,179.6 370.6,183.1 372.6,195.9 375.1,196.6 377.5,213.3 381.0,211.5 383.0,207.4 385.5,192.4 388.3,197.6 391.4,209.1 393.5,209.8 398.3,223.7 401.1,221.9 402.8,231.7 405.6,232.4 409.8,245.2 411.5,246.2 417.1,218.5 420.2,228.2 425.4,235.1 429.6,227.2 432.4,217.4 435.1,226.1 438.6,208.8 440.3,226.5 442.8,228.2 445.6,237.6 449.0,232.4 451.5,232.4 456.7,251.5 459.4,256.0 461.9,270.6 464.3,293.1 466.4,298.3 468.8,287.9 473.0,259.4 477.5,255.6 479.2,271.3 482.7,261.9 485.5,260.1 487.2,275.1 490.3,261.9 493.1,264.3 495.6,259.4 498.3,261.9 501.1,270.6 503.5,271.3 507.0,261.9 508.8,262.6 512.2,277.5 514.0,280.3 519.2,312.2 521.6,303.5 523.7,309.8 527.8,329.6 534.1,319.2 540.0,289.7 545.2,263.6 550.4,241.0 555.6,261.2 561.5,248.0 563.6,252.5 567.8,275.8 571.3,282.0 574.0,270.6 576.5,266.4 581.0,280.3 582.7,283.8 584.4,282.7 587.6,287.0 594.9,263.4 600.1,279.0 605.0,289.4 607.8,289.4 610.6,294.7 613.7,306.1 617.5,304.4 621.0,312.0 623.4,296.4 626.2,294.0 628.6,296.4 631.4,305.8 634.2,295.3 636.6,302.3 640.8,305.1 644.2,305.8 647.7,313.8 652.2,319.7 654.7,327.6 657.4,347.8 663.3,331.1 665.8,347.8 668.5,353.0 673.1,349.5 676.5,359.9 678.6,358.9 681.4,379.0 686.6,348.5 689.4,351.3 691.1,359.9 693.9,358.9 698.1,364.1 702.2,372.1 705.7,371.0 708.5,390.1 711.3,409.2 713.7,419.7 718.2,429.4 720.3,440.5 723.1,427.6 725.1,445.7 727.6,444.7 731.0,450.2 736.3,440.5 739.0,450.9 741.5,430.8 743.9,434.2 749.4,408.5 751.9,411.0 754.3,427.6 759.5,383.9 764.0,398.8 767.5,413.4 770.3,414.4 773.4,427.3 776.2,400.6 780.3,371.7 783.1,381.5 786.6,383.2 788.3,362.4 791.8,378.0 797.0,380.8 799.4,379.0 804.0,351.9 807.4,317.2 811.9,287.7 814.4,271.4 817.8,299.9 820.6,299.9 822.4,287.7 825.5,284.2 828.3,287.0 830.7,302.6 835.9,264.4 838.7,262.7 841.1,265.1 843.2,262.7 846.7,279.7 849.1,271.4 852.6,269.7 855.0,265.1 856.7,258.9 859.5,261.7 862.3,256.5 864.3,269.8 869.0,266.2 872.3,274.5 876.5,241.0 880.1,219.7 882.4,199.2 885.5,207.4 890.2,203.2 893.1,190.2 896.6,179.1 899.0,191.9 901.3,193.3 903.7,211.5 909.6,194.9 914.3,190.7 916.7,190.7 919.0,212.6 924.2,229.2 927.3,222.6 930.4,255.1 932.5,240.3 935.6,240.3 940.3,263.4 943.1,257.5 945.5,257.5 948.5,272.4 953.3,274.5 956.3,269.8 958.0,272.9 961.5,259.9 964.4,257.5 966.7,263.4 971.0,262.2 974.5,255.1 979.2,227.3 982.3,226.1 985.4,209.6 987.5,225.6 991.0,235.1 995.3,250.4 998.6,237.4 1003.3,232.0 1005.2,221.6 1008.8,228.0 1011.6,230.4 1013.5,214.5 1016.3,248.1 1019.4,261.5 1021.7,246.4 1024.1,237.4 1026.5,220.9 1029.5,209.6 1032.4,222.1 1034.7,217.8 1037.6,219.3 1040.6,200.4 1044.9,176.0 1047.7,172.0 1050.8,170.6 1053.6,170.1 1055.5,167.3 1058.3,179.6 1060.7,187.4 1063.5,185.5 1066.6,180.3 1068.3,180.8 1070.9,164.2 1073.2,158.8 1076.0,157.6 1079.6,156.4 1082.0,164.2 1084.6,171.3 1087.4,160.7 1089.5,158.8 1092.3,151.7 1094.9,154.8 1098.0,157.6 1100.8,163.1 1102.5,160.7 1105.6,172.5 1107.2,160.0 1110.3,159.5 1113.1,161.9 1115.5,156.4 1118.6,165.4 1121.4,169.4 1123.3,168.5 1126.1,180.3 1128.0,178.4 1131.1,182.7 1134.4,173.7 1136.7,183.8 1139.8,187.9 1142.2,186.7 1145.0,177.2 1147.4,170.6 1150.4,173.0 1152.8,175.3 1155.6,197.3 1157.5,190.7 1160.3,214.3 1162.9,212.6 1165.3,208.6 1168.1,213.4 1170.5,204.9 1173.3,204.4 1176.4,193.8" fill="none" stroke="#3f7cdc" stroke-width="1.08" stroke-linejoin="round"/>
<polyline points="4.3,536.1 6.7,536.1 9.0,548.5 13.1,547.6 16.7,538.5 22.6,530.2 26.2,531.4 29.8,530.2 38.1,521.8 42.9,520.6 50.0,518.3 58.4,529.0 60.8,527.8 63.6,532.5 66.7,527.3 75.0,527.1 78.6,521.3 83.4,520.6 87.0,522.5 91.7,526.6 97.7,519.0 102.5,519.0 107.2,526.6 113.2,535.6 118.4,519.9 123.9,521.3 129.9,518.3 133.4,523.0 137.0,521.8 140.6,525.4 143.0,523.7 146.5,526.6 150.1,527.1 152.5,531.4 155.3,547.6 159.6,546.4 168.0,546.4 171.6,549.2 176.3,543.3 179.9,542.8 185.8,538.0 193.0,537.3 194.2,538.5 197.3,534.5 202.0,540.9 206.1,532.5 210.2,521.8 213.2,520.6 215.6,525.4 219.7,526.1 226.4,518.3 229.9,521.3 234.7,520.6 243.0,515.2 246.6,514.7 252.1,511.1 253.8,514.2 257.3,512.3 259.7,513.5 264.5,512.3 268.8,512.8 270.4,506.3 273.5,504.4 276.4,508.0 281.2,509.4 288.3,518.3 293.1,519.0 299.0,522.5 304.5,521.8 306.2,533.7 309.3,549.2 315.0,542.1 320.5,546.4 322.9,545.7 327.6,538.5 338.3,538.5 341.2,540.9 343.6,535.4 350.3,535.4 352.6,537.3 355.0,536.1 357.4,530.2 359.5,528.3 364.8,540.9 367.9,540.9 372.6,539.0 375.0,540.4 378.1,539.2 380.5,544.5 383.4,542.1 389.3,545.7 396.5,545.7 398.8,543.7 401.2,538.5 403.6,538.5 406.7,536.1 409.6,536.1 414.3,528.3 416.7,529.0 422.7,536.6 427.4,531.4 432.9,521.1 435.8,520.2 439.3,523.0 441.7,523.7 445.3,529.5 448.9,525.4 453.6,528.3 459.6,528.3 463.2,531.4 469.8,538.5 473.9,533.7 478.7,533.3 483.0,527.8 485.3,527.1 487.5,531.4 493.0,524.7 495.3,524.2 498.9,522.3 500.6,522.5 503.7,525.4 506.5,521.1 512.0,527.8 516.3,524.7 519.2,525.9 521.6,533.7 523.9,531.4 528.2,538.0 529.9,538.5 532.3,536.6 540.6,524.7 543.5,524.2 546.6,522.5 548.5,520.6 550.6,513.5 555.4,513.5 559.2,507.5 561.6,507.1 563.5,505.1 566.3,508.7 568.7,521.8 571.6,532.1 576.4,532.5 584.7,537.3 587.6,542.6 591.8,539.7 595.9,534.9 597.8,536.1 602.6,536.1 605.4,530.9 608.5,514.2 610.9,514.2 613.3,529.5 616.9,529.5 618.8,527.3 621.1,529.5 624.0,523.7 626.4,521.8 628.8,523.7 631.6,535.4 634.7,533.3 637.1,533.3 642.6,535.4 645.0,532.1 647.8,533.0 651.4,534.9 653.8,535.6 659.7,539.7 663.3,543.3 668.1,543.3 671.7,542.1 678.8,542.1 681.7,545.2 684.0,536.1 686.4,524.2 689.5,523.0 691.9,524.7 695.0,534.9 698.3,540.9 702.6,541.4 705.2,540.4 709.5,542.1 717.9,542.6 720.3,549.2 726.2,549.2 731.0,546.8 733.8,540.4 736.9,538.5 739.3,538.5 741.7,539.7 746.5,531.4 749.6,529.0 752.4,521.8 754.8,519.9 758.4,513.5 762.4,509.9 765.5,514.2 770.3,514.2 773.4,519.4 778.6,511.1 782.2,511.6 786.3,515.9 789.3,514.2 791.0,514.7 793.6,521.1 796.5,523.0 802.5,515.9 810.1,507.5 813.9,507.5 817.9,512.8 820.3,513.5 822.7,509.9 825.8,509.9 828.7,511.6 835.3,508.2 838.7,506.3 841.8,512.8 848.9,522.5 852.5,523.0 856.1,520.6 858.4,523.7 862.5,534.5 868.0,534.5 869.6,533.0 872.5,536.1 875.6,519.9 878.7,515.2 882.8,511.1 888.2,513.5 895.4,510.4 901.3,509.9 906.8,513.5 909.2,512.3 911.3,520.6 913.7,521.1 918.0,529.7 920.4,532.5 926.4,536.1 932.3,543.3 935.4,539.7 938.3,539.2 943.0,536.1 947.8,540.9 950.2,546.4 953.3,527.8 956.1,528.3 959.2,523.7 966.4,517.5 969.2,517.5 971.6,521.3 976.9,516.6 980.0,515.9 984.7,511.6 987.6,508.0 990.2,524.2 993.1,530.2 995.5,534.2 998.3,534.5 1000.7,538.5 1008.6,532.5 1012.6,533.3 1016.9,538.0 1021.7,540.9 1026.4,538.5 1032.4,527.3 1034.8,529.0 1037.6,519.4 1042.4,522.3 1047.4,514.2 1050.2,514.7 1055.2,505.6 1060.7,514.2 1066.7,514.2 1073.1,508.0 1076.7,512.3 1079.1,511.6 1084.5,522.3 1087.6,522.3 1090.0,518.3 1092.4,517.1 1094.8,512.3 1098.8,514.2 1106.0,520.6 1107.7,519.4 1110.8,523.0 1113.9,521.1 1115.5,522.3 1123.4,519.4 1131.5,536.1 1134.6,530.2 1139.3,534.5 1142.4,530.2 1144.8,532.5 1147.2,531.4 1149.6,526.1 1153.6,528.5 1157.2,529.5 1162.5,536.1 1167.9,533.3 1170.3,535.4 1173.4,535.4 1176.5,529.7" fill="none" stroke="#479a18" stroke-width="1.05" stroke-linejoin="round"/>
<polyline points="4.8,575.8 14.3,574.4 28.6,574.9 47.6,575.8 71.5,576.8 119.0,575.8 157.2,575.8 200.0,579.2 228.7,575.8 257.3,572.5 266.8,572.0 271.6,566.3 278.7,566.3 285.9,568.7 309.7,569.6 316.9,569.6 326.4,574.4 333.6,573.4 340.7,576.8 350.2,575.8 366.9,579.2 395.5,583.0 428.9,583.0 438.4,582.0 464.6,585.4 481.3,583.4 500.3,584.4 524.2,585.4 538.5,584.4 562.3,581.5 567.0,583.0 574.2,587.3 586.1,587.7 605.2,586.3 612.3,587.7 629.0,586.8 645.7,588.2 655.2,591.1 667.1,590.1 676.6,591.1 688.5,589.2 693.3,585.4 698.1,588.7 710.0,590.1 719.0,592.5 752.4,592.5 761.9,591.1 773.9,593.5 783.4,590.1 797.7,593.5 814.4,587.7 828.7,586.8 838.2,584.4 847.7,584.4 859.6,583.0 864.4,579.2 871.5,576.8 876.3,565.3 883.5,559.1 888.2,560.1 895.4,556.8 900.1,560.6 907.3,561.5 914.4,559.1 921.6,562.5 928.7,566.3 938.2,568.7 950.2,567.7 953.5,575.8 966.8,574.4 981.1,570.1 989.7,571.1 996.4,577.3 1005.0,572.5 1014.5,573.4 1033.6,574.4 1052.6,571.1 1066.9,571.1 1078.8,568.7 1086.0,569.6 1093.1,568.2 1105.0,569.6 1128.9,569.6 1138.4,571.1 1145.5,570.1 1159.8,572.5 1164.6,571.1 1171.7,572.0 1177.0,571.1" fill="none" stroke="#3a6ca8" stroke-width="1.1" stroke-linejoin="round"/>
<path d="M5.5 618.8v3.6M8.5 618.8v4.3M11.5 618.8v5.1M14.5 618.8v4.2M16.5 618.8v3.0M19.5 618.8v1.7M27.5 618.8v-1.5M30.5 618.8v-1.9M32.5 618.8v-1.9M35.5 618.8v-1.9M38.5 618.8v-1.9M41.5 618.8v-1.6M43.5 618.8v-1.4M46.5 618.8v-1.1M49.5 618.8v-1.0M51.5 618.8v-1.1M54.5 618.8v-1.1M57.5 618.8v-1.0M65.5 618.8v1.0M68.5 618.8v1.0M70.5 618.8v1.0M73.5 618.8v1.0M76.5 618.8v1.0M97.5 618.8v-1.0M100.5 618.8v-1.5M103.5 618.8v-2.1M105.5 618.8v-2.6M108.5 618.8v-3.3M111.5 618.8v-4.2M114.5 618.8v-4.6M116.5 618.8v-4.9M119.5 618.8v-5.3M122.5 618.8v-5.1M124.5 618.8v-4.6M127.5 618.8v-4.0M130.5 618.8v-3.6M132.5 618.8v-3.3M135.5 618.8v-2.4M138.5 618.8v-1.3M141.5 618.8v-1.0M143.5 618.8v-1.0M149.5 618.8v1.0M151.5 618.8v1.1M154.5 618.8v1.7M157.5 618.8v2.0M159.5 618.8v2.2M162.5 618.8v2.0M165.5 618.8v1.9M168.5 618.8v2.0M170.5 618.8v2.0M173.5 618.8v2.1M176.5 618.8v1.5M178.5 618.8v1.0M184.5 618.8v-1.0M187.5 618.8v-1.3M189.5 618.8v-1.3M192.5 618.8v-1.4M195.5 618.8v-1.4M197.5 618.8v-1.4M200.5 618.8v-1.1M203.5 618.8v-1.0M205.5 618.8v-1.0M208.5 618.8v-1.0M211.5 618.8v-1.0M214.5 618.8v-1.0M216.5 618.8v-1.2M219.5 618.8v-1.3M222.5 618.8v-1.5M224.5 618.8v-1.4M227.5 618.8v-1.3M230.5 618.8v-1.4M232.5 618.8v-1.6M235.5 618.8v-1.9M238.5 618.8v-2.3M241.5 618.8v-2.6M243.5 618.8v-2.6M246.5 618.8v-2.6M249.5 618.8v-2.8M251.5 618.8v-2.9M254.5 618.8v-3.2M257.5 618.8v-3.5M259.5 618.8v-3.7M262.5 618.8v-3.4M265.5 618.8v-2.9M268.5 618.8v-2.3M270.5 618.8v-1.8M276.5 618.8v1.0M278.5 618.8v1.2M281.5 618.8v2.3M284.5 618.8v3.0M287.5 618.8v3.4M289.5 618.8v3.7M292.5 618.8v4.1M295.5 618.8v4.0M297.5 618.8v4.0M300.5 618.8v3.9M303.5 618.8v3.8M305.5 618.8v3.7M308.5 618.8v3.0M311.5 618.8v2.4M314.5 618.8v1.7M316.5 618.8v1.3M319.5 618.8v1.0M322.5 618.8v1.0M324.5 618.8v1.0M335.5 618.8v1.0M338.5 618.8v1.0M341.5 618.8v1.0M343.5 618.8v1.0M346.5 618.8v1.0M349.5 618.8v1.0M351.5 618.8v1.0M354.5 618.8v1.0M357.5 618.8v1.1M359.5 618.8v1.1M362.5 618.8v1.2M365.5 618.8v2.3M368.5 618.8v2.8M370.5 618.8v3.1M373.5 618.8v3.6M376.5 618.8v3.8M378.5 618.8v3.8M381.5 618.8v3.7M384.5 618.8v3.8M387.5 618.8v2.5M389.5 618.8v1.6M411.5 618.8v1.0M419.5 618.8v-1.0M422.5 618.8v-1.0M424.5 618.8v-1.4M427.5 618.8v-1.8M430.5 618.8v-2.2M432.5 618.8v-2.4M435.5 618.8v-2.8M438.5 618.8v-3.1M441.5 618.8v-2.7M443.5 618.8v-2.4M446.5 618.8v-2.0M449.5 618.8v-1.5M451.5 618.8v-1.2M454.5 618.8v-1.0M460.5 618.8v1.0M462.5 618.8v1.5M465.5 618.8v2.9M468.5 618.8v4.3M470.5 618.8v3.4M473.5 618.8v1.9M476.5 618.8v1.0M481.5 618.8v-1.0M484.5 618.8v-1.0M487.5 618.8v-1.2M489.5 618.8v-1.4M492.5 618.8v-1.5M495.5 618.8v-1.5M497.5 618.8v-1.5M500.5 618.8v-1.5M503.5 618.8v-1.0M505.5 618.8v-1.0M514.5 618.8v1.3M516.5 618.8v2.0M519.5 618.8v2.5M522.5 618.8v2.7M524.5 618.8v2.8M527.5 618.8v2.7M530.5 618.8v2.7M532.5 618.8v2.8M535.5 618.8v1.9M538.5 618.8v1.0M541.5 618.8v-1.0M543.5 618.8v-2.8M546.5 618.8v-4.8M549.5 618.8v-6.8M551.5 618.8v-7.1M554.5 618.8v-7.0M557.5 618.8v-6.5M560.5 618.8v-5.0M562.5 618.8v-3.5M565.5 618.8v-2.2M568.5 618.8v-1.0M573.5 618.8v1.0M576.5 618.8v1.0M578.5 618.8v1.3M581.5 618.8v1.6M584.5 618.8v1.3M587.5 618.8v1.1M589.5 618.8v1.0M592.5 618.8v1.0M600.5 618.8v1.0M603.5 618.8v1.0M605.5 618.8v1.0M608.5 618.8v1.2M611.5 618.8v1.5M614.5 618.8v1.7M616.5 618.8v1.7M619.5 618.8v1.8M622.5 618.8v1.9M624.5 618.8v1.6M627.5 618.8v1.1M630.5 618.8v1.0M632.5 618.8v1.0M635.5 618.8v1.0M638.5 618.8v1.0M641.5 618.8v1.0M643.5 618.8v1.0M646.5 618.8v1.0M657.5 618.8v1.0M660.5 618.8v1.0M662.5 618.8v1.1M665.5 618.8v1.5M668.5 618.8v1.6M670.5 618.8v1.6M673.5 618.8v1.6M676.5 618.8v1.5M678.5 618.8v1.5M681.5 618.8v1.5M684.5 618.8v1.3M687.5 618.8v1.0M689.5 618.8v1.0M700.5 618.8v-1.0M703.5 618.8v-1.0M708.5 618.8v1.0M711.5 618.8v1.3M714.5 618.8v1.4M716.5 618.8v1.5M719.5 618.8v1.7M722.5 618.8v1.8M724.5 618.8v1.9M727.5 618.8v1.5M730.5 618.8v1.1M733.5 618.8v1.0M735.5 618.8v1.0M743.5 618.8v-1.0M746.5 618.8v-1.8M749.5 618.8v-2.6M751.5 618.8v-3.3M754.5 618.8v-3.9M757.5 618.8v-4.1M760.5 618.8v-4.3M762.5 618.8v-4.4M765.5 618.8v-3.5M768.5 618.8v-2.9M770.5 618.8v-2.5M773.5 618.8v-1.9M776.5 618.8v-1.6M778.5 618.8v-1.7M781.5 618.8v-2.1M784.5 618.8v-2.5M787.5 618.8v-2.9M789.5 618.8v-2.7M792.5 618.8v-2.4M795.5 618.8v-2.0M797.5 618.8v-1.8M800.5 618.8v-1.4M803.5 618.8v-1.0M805.5 618.8v-1.7M808.5 618.8v-2.9M811.5 618.8v-4.0M814.5 618.8v-4.4M816.5 618.8v-4.2M819.5 618.8v-4.1M822.5 618.8v-4.0M824.5 618.8v-3.5M827.5 618.8v-2.6M830.5 618.8v-2.1M833.5 618.8v-1.9M835.5 618.8v-1.8M838.5 618.8v-1.6M841.5 618.8v-1.0M849.5 618.8v1.0M851.5 618.8v1.0M854.5 618.8v1.0M857.5 618.8v1.0M868.5 618.8v1.0M870.5 618.8v1.2M873.5 618.8v1.9M878.5 618.8v-1.1M881.5 618.8v-2.5M884.5 618.8v-3.5M887.5 618.8v-4.2M889.5 618.8v-4.7M892.5 618.8v-4.7M895.5 618.8v-4.7M897.5 618.8v-4.5M900.5 618.8v-2.3M903.5 618.8v-1.0M908.5 618.8v1.0M911.5 618.8v1.7M914.5 618.8v2.5M916.5 618.8v3.1M919.5 618.8v4.1M922.5 618.8v5.1M924.5 618.8v5.7M927.5 618.8v6.2M930.5 618.8v6.7M933.5 618.8v7.2M935.5 618.8v7.0M938.5 618.8v6.3M941.5 618.8v5.5M943.5 618.8v4.9M946.5 618.8v4.6M949.5 618.8v4.6M951.5 618.8v4.9M954.5 618.8v4.4M957.5 618.8v3.3M960.5 618.8v2.2M962.5 618.8v1.5M965.5 618.8v1.0M973.5 618.8v-1.3M976.5 618.8v-2.5M978.5 618.8v-2.9M981.5 618.8v-3.6M984.5 618.8v-3.9M987.5 618.8v-4.1M989.5 618.8v-4.4M992.5 618.8v-3.9M995.5 618.8v-2.6M997.5 618.8v-1.8M1000.5 618.8v-1.0M1003.5 618.8v-1.0M1006.5 618.8v-1.0M1008.5 618.8v-1.0M1011.5 618.8v-1.0M1019.5 618.8v1.1M1022.5 618.8v1.8M1024.5 618.8v1.1M1030.5 618.8v-1.0M1033.5 618.8v-1.6M1035.5 618.8v-1.9M1038.5 618.8v-2.3M1041.5 618.8v-3.2M1043.5 618.8v-3.8M1046.5 618.8v-4.8M1049.5 618.8v-5.2M1051.5 618.8v-5.1M1054.5 618.8v-4.7M1057.5 618.8v-3.3M1060.5 618.8v-1.0M1076.5 618.8v-1.0M1078.5 618.8v-1.0M1092.5 618.8v1.0M1095.5 618.8v1.0M1097.5 618.8v1.0M1100.5 618.8v1.3M1103.5 618.8v2.2M1106.5 618.8v2.6M1108.5 618.8v2.6M1111.5 618.8v2.6M1114.5 618.8v2.6M1116.5 618.8v2.5M1119.5 618.8v2.3M1122.5 618.8v2.1M1124.5 618.8v2.1M1127.5 618.8v2.1M1130.5 618.8v2.1M1133.5 618.8v2.0M1135.5 618.8v1.9M1138.5 618.8v1.6M1141.5 618.8v1.1M1143.5 618.8v1.0M1151.5 618.8v1.0M1154.5 618.8v1.1M1157.5 618.8v1.7M1160.5 618.8v2.4M1162.5 618.8v2.9M1165.5 618.8v3.4M1168.5 618.8v4.0M1170.5 618.8v3.2M1173.5 618.8v2.0M1176.5 618.8v1.0" stroke="#ff006e" stroke-width="1" fill="none"/>
<path d="M3.8 628.9C7.8 630.5 7.6 631.4 15.9 633.7C24.2 636.0 18.0 636.4 28.6 635.9C39.2 635.4 33.8 633.9 47.6 632.1C61.4 630.3 54.0 631.2 69.9 630.5C85.8 629.8 81.5 631.2 95.3 629.9C109.1 628.6 100.6 629.7 111.2 626.7C121.8 623.7 117.6 624.0 127.1 621.0C136.6 618.0 131.3 618.5 139.8 617.8C148.3 617.1 144.0 617.4 152.5 618.8C161.0 620.2 155.7 620.0 165.2 622.0C174.7 624.0 170.5 623.9 181.1 624.8C191.7 625.7 183.2 625.7 197.0 624.8C210.8 623.9 207.6 624.3 222.4 622.0C237.2 619.7 228.7 621.3 241.4 617.8C254.1 614.3 249.9 614.6 260.5 611.5C271.1 608.4 265.8 609.7 273.2 608.6C280.6 607.5 276.4 607.7 282.7 608.3C289.0 608.9 284.8 608.1 292.2 610.5C299.6 612.9 296.5 612.4 305.0 615.6C313.5 618.8 309.2 617.9 317.7 620.0C326.2 622.1 319.8 620.9 330.4 622.0C341.0 623.1 337.8 622.5 349.4 623.2C361.0 623.9 354.7 622.5 365.3 624.2C375.9 625.9 370.6 625.9 381.2 628.3C391.8 630.7 386.5 629.9 397.1 631.5C407.7 633.1 403.5 632.9 413.0 633.1C422.5 633.3 417.2 633.5 425.7 632.1C434.2 630.7 429.9 630.8 438.4 628.9C446.9 627.0 443.7 627.4 451.1 626.4C458.5 625.4 454.3 625.5 460.6 625.8C466.9 626.1 463.7 626.4 470.0 627.4C476.3 628.4 472.1 628.9 479.5 628.9C486.9 628.9 483.7 628.7 492.2 627.4C500.7 626.1 496.4 626.2 504.9 625.1C513.4 624.0 509.1 623.7 517.6 624.2C526.1 624.7 521.8 625.3 530.3 626.7C538.8 628.1 535.7 628.8 543.1 628.3C550.5 627.8 546.3 628.3 552.6 625.1C558.9 621.9 555.7 621.8 562.1 618.8C568.5 615.8 565.3 617.1 571.7 616.2C578.1 615.3 572.7 615.4 581.2 616.2C589.7 617.0 586.5 617.2 597.1 618.5C607.7 619.8 602.4 618.6 613.0 620.0C623.6 621.4 615.1 621.5 628.8 622.6C642.5 623.7 641.5 622.4 654.2 623.2C666.9 624.0 657.4 623.7 666.9 625.1C676.4 626.5 672.2 626.9 682.8 627.4C693.4 627.9 689.2 626.8 698.7 626.7C708.2 626.6 702.9 626.0 711.4 627.0C719.9 628.0 714.6 627.9 724.1 629.6C733.6 631.3 730.5 631.8 740.0 632.1C749.5 632.4 744.2 632.8 752.7 630.5C761.2 628.2 756.9 628.3 765.4 625.1C773.9 621.9 769.6 623.2 778.1 621.0C786.6 618.8 782.3 620.3 790.8 618.5C799.3 616.7 795.0 618.5 803.5 615.6C812.0 612.7 807.7 613.4 816.2 609.9C824.7 606.4 820.4 607.4 828.9 605.1C837.4 602.8 833.2 603.4 841.7 602.9C850.2 602.4 845.9 602.4 854.4 603.5C862.9 604.6 859.7 604.8 867.1 606.1C874.5 607.4 869.2 607.3 876.6 607.3C884.0 607.3 880.8 607.9 889.3 606.1C897.8 604.3 893.5 603.6 902.0 601.9C910.5 600.2 907.3 600.2 914.7 601.0C922.1 601.8 916.8 600.7 924.2 604.2C931.6 607.7 929.7 606.9 937.0 611.5C944.3 616.1 941.8 615.2 946.0 618.0C950.2 620.8 944.1 617.6 949.5 620.0C954.9 622.4 953.7 623.4 962.2 625.1C970.7 626.8 966.4 626.5 974.9 625.1C983.4 623.7 979.1 623.4 987.6 621.0C996.1 618.6 991.9 619.4 1000.4 617.8C1008.9 616.2 1004.6 616.4 1013.1 616.2C1021.6 616.0 1017.3 617.0 1025.8 617.2C1034.3 617.4 1030.0 618.5 1038.5 616.9C1047.0 615.3 1043.8 615.3 1051.2 612.4C1058.6 609.5 1053.3 610.0 1060.7 608.3C1068.1 606.6 1063.9 607.6 1073.4 607.3C1082.9 607.0 1079.8 607.2 1089.3 607.3C1098.8 607.4 1093.5 606.8 1102.0 607.7C1110.5 608.6 1105.2 607.8 1114.7 609.9C1124.2 612.0 1120.0 611.0 1130.6 614.0C1141.2 617.0 1135.9 616.5 1146.5 618.8C1157.1 621.1 1152.3 619.2 1162.4 621.0C1172.5 622.8 1171.9 623.1 1176.7 624.2" fill="none" stroke="#f88414" stroke-width="1.1" stroke-linejoin="round"/>
<path d="M3.8 632.1C6.8 634.0 6.6 636.7 12.7 637.8C18.8 638.9 13.7 637.2 22.2 635.3C30.7 633.4 27.5 633.7 38.1 632.1C48.7 630.5 44.5 630.7 54.0 630.5C63.5 630.3 52.9 631.8 66.7 631.5C80.5 631.2 81.5 632.0 95.3 629.6C109.1 627.2 99.5 628.1 108.0 624.2C116.5 620.3 112.2 620.5 120.7 617.8C129.2 615.1 124.9 616.2 133.4 616.2C141.9 616.2 137.6 615.7 146.1 617.8C154.6 619.9 149.3 619.9 158.8 622.6C168.3 625.3 165.2 625.5 174.7 625.8C184.2 626.1 176.8 624.4 187.4 623.5C198.0 622.6 192.7 624.6 206.5 623.2C220.3 621.8 214.9 622.8 228.7 619.4C242.5 616.0 237.2 617.0 247.8 613.1C258.4 609.2 253.1 609.6 260.5 607.7C267.9 605.8 263.7 606.6 270.0 607.3C276.3 608.0 272.1 607.5 279.5 609.9C286.9 612.3 283.7 611.4 292.2 614.6C300.7 617.8 296.5 617.3 305.0 619.4C313.5 621.5 308.2 619.9 317.7 621.0C327.2 622.1 322.9 621.5 333.5 622.6C344.1 623.7 339.9 623.4 349.4 624.2C358.9 625.0 353.6 623.0 362.1 625.1C370.6 627.2 367.4 627.9 374.8 630.5C382.2 633.1 378.0 632.8 384.4 632.8C390.8 632.8 386.5 630.5 393.9 630.5C401.3 630.5 400.2 631.7 406.6 632.8C413.0 633.9 406.6 634.5 413.0 633.7C419.4 632.9 417.2 633.1 425.7 630.5C434.2 627.9 429.9 627.6 438.4 625.8C446.9 624.0 443.7 624.9 451.1 625.1C458.5 625.3 454.8 624.3 460.6 626.4C466.4 628.5 463.3 630.7 468.6 631.5C473.9 632.3 469.7 630.6 476.5 628.9C483.3 627.2 480.7 628.0 489.1 626.4C497.5 624.8 494.4 624.7 501.8 624.2C509.2 623.7 503.9 623.4 511.3 624.8C518.7 626.2 516.6 626.6 524.0 628.3C531.4 630.0 527.7 630.2 533.5 629.9C539.3 629.6 536.2 630.9 541.5 627.4C546.8 623.9 543.6 623.7 549.4 619.4C555.2 615.1 552.5 615.7 558.9 614.6C565.3 613.5 561.1 615.1 568.5 616.2C575.9 617.3 571.7 616.9 581.2 617.8C590.7 618.7 587.6 617.7 597.1 618.8C606.6 619.9 601.3 619.4 609.8 621.0C618.3 622.6 607.7 622.7 622.5 623.5C637.3 624.3 639.4 622.4 654.2 623.5C669.0 624.6 657.4 624.9 666.9 626.7C676.4 628.5 674.3 628.7 682.8 628.9C691.3 629.1 686.0 628.4 692.4 627.4C698.8 626.4 695.6 625.5 701.9 625.8C708.2 626.1 704.0 626.4 711.4 628.3C718.8 630.2 714.6 630.2 724.1 631.5C733.6 632.8 731.5 633.2 740.0 632.1C748.5 631.0 742.1 631.7 749.5 628.3C756.9 624.9 753.7 624.6 762.2 622.0C770.7 619.4 766.4 622.3 774.9 620.4C783.4 618.5 778.2 618.1 787.7 616.2C797.2 614.3 795.0 617.8 803.5 614.6C812.0 611.4 806.7 610.4 813.1 606.7C819.5 603.0 814.1 605.1 822.6 603.5C831.1 601.9 829.0 601.7 838.5 601.9C848.0 602.1 842.7 603.1 851.2 604.2C859.7 605.3 856.5 603.5 863.9 605.1C871.3 606.7 867.0 609.4 873.4 608.9C879.8 608.4 875.0 606.9 883.0 603.5C891.0 600.1 889.9 599.3 897.3 598.8C904.7 598.3 899.4 600.3 905.2 601.9C911.0 603.5 908.4 600.8 914.7 603.5C921.0 606.2 917.8 605.4 924.2 609.9C930.6 614.4 927.4 613.2 933.8 616.9C940.2 620.6 937.0 617.8 943.3 621.0C949.6 624.2 946.4 624.5 952.7 626.4C959.0 628.3 955.8 627.2 962.2 626.7C968.6 626.2 965.4 627.2 971.8 624.8C978.2 622.4 975.0 622.5 981.3 619.4C987.6 616.3 984.4 616.3 990.8 615.6C997.2 614.9 993.0 617.2 1000.4 617.2C1007.8 617.2 1005.7 615.1 1013.1 615.6C1020.5 616.1 1016.3 618.8 1022.6 618.8C1028.9 618.8 1026.8 617.0 1032.1 615.6C1037.4 614.2 1033.2 617.0 1038.5 614.6C1043.8 612.2 1042.2 611.2 1048.0 608.3C1053.8 605.4 1051.2 605.8 1056.0 605.8C1060.8 605.8 1055.4 608.0 1062.3 608.3C1069.2 608.6 1067.6 606.9 1076.6 606.7C1085.6 606.5 1081.9 607.2 1089.3 607.7C1096.7 608.2 1093.5 607.3 1098.8 608.3C1104.1 609.3 1097.8 609.0 1105.2 610.8C1112.6 612.6 1110.5 611.4 1121.1 613.7C1131.7 616.0 1127.5 615.9 1137.0 617.8C1146.5 619.7 1142.3 617.8 1149.7 619.4C1157.1 621.0 1152.9 620.3 1159.2 622.6C1165.5 624.9 1162.9 625.7 1168.7 626.4C1174.5 627.1 1174.0 625.3 1176.7 624.8" fill="none" stroke="#0a96fd" stroke-width="1.1" stroke-linejoin="round"/>
<polyline points="4.0,698.2 11.9,698.2 14.9,694.6 21.8,671.4 24.2,689.2 29.8,684.7 37.7,669.4 40.7,667.4 45.7,695.6 48.6,692.6 53.2,676.1 61.5,696.6 69.5,682.7 71.5,683.7 77.4,669.2 79.4,689.2 83.4,686.7 88.0,695.6 90.3,693.6 94.3,678.7 97.3,645.0 99.9,659.9 103.2,649.3 106.2,653.9 108.8,649.9 111.6,660.8 114.2,660.8 116.1,647.9 118.7,645.0 123.1,649.5 127.1,649.9 129.4,648.9 131.0,669.8 134.0,656.9 139.0,670.8 142.0,670.8 147.9,679.7 152.9,693.6 158.8,698.6 160.8,698.2 165.2,690.2 167.8,693.6 171.7,693.6 176.3,675.3 179.3,691.6 184.6,656.9 188.6,661.4 191.6,669.8 194.6,686.7 196.5,678.7 202.5,692.6 210.4,665.8 215.4,663.8 218.4,664.8 220.4,671.8 223.3,646.9 226.3,647.9 231.3,672.8 234.3,669.8 237.2,668.8 241.2,645.0 245.2,646.0 249.2,650.9 252.5,660.4 256.1,653.9 262.5,648.3 265.0,652.9 268.4,663.4 273.0,659.9 278.3,674.3 281.9,669.4 285.9,674.7 288.9,696.6 291.8,693.6 294.2,696.2 296.0,692.6 298.9,696.2 302.9,689.6 307.9,697.6 309.9,694.6 312.4,676.3 314.8,677.7 322.8,693.6 325.7,690.6 328.7,674.3 330.7,674.3 333.7,679.7 336.7,697.6 338.6,689.6 340.6,689.6 343.2,681.3 346.6,690.6 349.6,689.6 351.5,679.3 356.5,696.2 358.5,695.2 362.5,698.6 364.4,696.6 367.4,696.6 372.4,694.6 375.4,684.3 377.4,697.6 383.3,693.6 385.9,681.3 388.3,683.7 391.2,693.2 393.2,693.6 397.2,698.6 400.2,697.6 407.1,695.2 410.1,695.6 413.1,689.6 417.7,670.4 419.0,677.7 422.0,678.7 425.6,681.7 427.0,676.7 432.3,654.3 435.3,665.4 438.3,646.4 440.9,667.8 443.3,669.4 446.8,681.7 450.8,686.7 453.8,696.6 455.8,695.2 461.1,698.6 464.7,687.6 466.7,689.6 469.7,685.7 473.6,671.4 477.6,663.4 479.6,672.8 482.6,666.8 485.5,664.8 487.5,672.8 490.5,658.5 493.5,658.3 495.5,654.3 497.9,656.9 500.4,669.4 503.4,670.8 506.4,667.8 508.4,670.8 511.4,697.6 513.3,697.6 516.3,694.6 519.3,698.6 521.9,685.3 524.3,690.6 527.2,698.6 530.2,694.6 533.2,692.6 536.2,686.7 541.1,665.8 545.1,651.9 548.7,646.4 552.1,650.9 555.6,660.4 561.0,652.9 564.0,656.3 567.9,670.8 570.9,674.3 573.9,674.7 576.9,681.7 579.9,692.6 582.8,695.6 585.0,693.6 587.5,697.6 590.9,687.6 595.5,665.8 599.9,686.7 602.2,685.7 605.2,695.6 607.8,693.6 613.4,698.6 618.7,692.6 621.3,697.6 623.7,682.7 626.7,681.3 631.6,691.6 634.6,673.4 639.6,685.7 643.9,686.7 647.5,696.6 652.5,693.6 655.4,696.6 657.4,696.6 663.4,680.3 666.4,695.6 669.3,696.6 673.3,693.6 676.7,698.6 681.3,697.6 683.2,693.6 686.6,671.4 689.2,671.4 691.6,677.7 694.2,676.3 699.1,682.7 703.1,686.7 705.1,684.7 707.7,696.6 711.0,698.6 715.0,698.2 718.0,694.6 720.6,698.6 722.9,690.6 724.9,693.6 730.9,692.6 736.8,685.7 738.8,690.2 741.8,676.7 744.8,674.7 747.2,660.8 749.3,645.4 752.3,648.3 754.7,664.8 757.3,648.3 759.7,651.3 762.7,656.9 767.6,672.8 770.6,673.4 773.6,682.7 780.5,649.3 783.5,658.3 786.5,660.4 788.5,645.4 791.4,657.9 796.4,661.4 799.4,658.9 801.4,649.3 806.3,645.4 810.3,646.9 813.3,650.9 814.7,645.4 817.6,659.5 820.2,659.5 823.2,652.9 826.2,651.3 829.2,653.9 830.5,661.4 835.5,646.4 839.1,649.9 843.1,650.9 846.4,671.4 849.0,661.4 853.0,658.3 856.4,652.3 858.9,654.9 861.9,650.3 864.5,662.4 867.5,662.4 872.4,673.4 876.0,646.9 881.9,646.4 885.9,652.3 889.9,650.3 893.8,646.4 897.8,650.9 899.8,654.9 901.8,655.5 903.8,665.8 908.7,657.5 910.7,659.9 914.7,659.9 919.6,689.6 924.6,697.6 927.6,687.6 930.6,694.6 932.5,686.7 935.5,686.7 940.5,698.6 943.5,694.6 948.4,697.6 950.4,692.6 953.4,692.6 957.4,687.6 960.3,686.7 964.9,669.8 966.3,675.3 971.3,673.4 974.6,655.5 977.6,645.4 980.2,645.4 982.8,649.9 985.5,645.4 988.1,658.3 992.1,670.8 995.5,680.3 999.0,670.8 1003.4,665.4 1006.0,657.5 1009.0,663.4 1011.4,670.8 1013.5,652.9 1016.5,696.6 1018.9,696.2 1022.9,673.8 1026.8,650.9 1029.4,646.4 1032.4,659.5 1034.8,654.9 1037.4,657.5 1039.7,646.4 1042.7,645.4 1048.7,647.3 1053.6,646.9 1055.6,645.4 1058.6,657.5 1060.6,662.4 1063.6,661.4 1068.5,657.5 1071.5,646.9 1074.5,650.9 1078.5,650.9 1081.4,659.9 1084.4,670.2 1088.4,655.5 1092.4,646.4 1096.3,657.5 1100.3,666.8 1101.9,664.8 1105.3,687.2 1107.6,665.4 1110.2,665.4 1112.6,669.4 1115.6,660.4 1118.2,674.7 1123.1,688.6 1126.5,698.6 1131.1,693.6 1134.0,679.7 1137.0,693.6 1140.0,693.6 1143.6,684.7 1147.5,669.8 1149.9,671.4 1151.9,670.4 1155.5,698.6 1157.3,680.7 1160.3,694.6 1164.8,688.6 1167.4,689.6 1170.0,684.7 1173.2,683.3 1177.0,670.8" fill="none" stroke="#0a96fd" stroke-width="1.1" stroke-linejoin="round"/>
<polyline points="4.0,695.6 6.9,695.6 8.9,698.2 11.9,698.6 15.9,693.6 22.2,679.7 26.8,681.3 29.8,686.7 34.7,680.7 41.1,669.8 42.7,671.8 46.7,685.7 50.6,691.6 56.6,682.1 58.6,682.7 63.1,690.6 66.5,693.6 72.5,686.7 78.4,676.1 82.4,681.7 86.4,689.6 91.3,692.2 95.3,683.7 99.3,661.8 103.2,653.9 105.2,650.9 108.2,653.5 113.2,657.9 117.1,652.9 121.5,647.3 125.1,649.5 129.0,651.9 132.0,657.9 137.0,661.8 141.0,664.8 146.9,676.7 153.9,690.6 161.8,697.6 166.8,693.6 172.7,693.2 179.7,684.7 184.6,673.8 189.6,659.9 193.6,669.8 198.5,679.7 205.5,685.3 210.4,675.7 216.4,664.8 220.4,665.8 228.3,652.9 232.3,663.8 236.3,670.4 240.2,663.8 244.2,649.9 247.2,646.9 250.1,649.9 255.1,656.3 259.1,652.9 264.0,649.9 268.0,654.9 272.0,659.9 275.0,660.4 281.9,670.8 285.9,674.7 289.9,689.6 293.8,693.6 298.0,696.2 302.9,693.2 307.9,693.6 309.9,695.6 312.8,688.6 317.2,679.3 319.8,681.7 325.3,691.6 329.7,681.7 333.3,675.3 336.7,685.7 341.2,692.6 344.6,687.6 348.6,687.6 353.5,685.7 357.5,692.6 362.5,697.2 367.4,697.6 372.4,695.6 376.4,691.6 380.3,692.6 383.3,695.2 387.3,687.6 390.3,686.7 393.2,691.6 398.2,696.6 402.2,697.6 409.1,696.2 413.1,692.6 417.1,682.7 420.0,676.3 423.0,676.7 427.0,678.7 432.0,671.8 435.9,659.9 438.9,655.9 442.9,660.8 445.8,672.8 451.8,686.7 456.8,694.6 460.7,697.6 465.7,692.6 469.7,686.7 474.6,672.8 477.6,667.8 481.6,666.8 487.5,666.8 492.9,663.4 496.5,656.3 499.5,659.9 504.4,667.8 508.4,669.8 511.4,679.7 514.3,692.6 518.3,697.2 521.3,693.6 525.3,692.2 528.2,693.6 532.2,696.6 536.2,692.6 540.1,679.7 545.1,661.8 550.1,648.9 553.1,649.9 557.0,657.9 563.0,654.9 566.0,657.9 569.9,667.8 575.9,675.3 579.9,682.7 583.8,692.6 586.8,694.6 587.9,695.2 591.9,686.7 597.5,672.8 600.8,679.7 604.8,689.6 608.8,690.6 612.8,695.6 616.7,696.2 621.7,693.6 627.6,684.7 631.2,687.6 635.6,681.3 639.0,678.1 643.5,685.7 648.5,690.6 653.5,694.6 659.4,694.2 665.0,687.6 668.3,690.6 671.3,695.6 677.3,696.6 682.2,697.2 685.2,689.6 688.8,677.7 691.2,673.8 695.1,676.3 700.1,680.3 704.1,684.7 707.1,690.2 712.0,697.2 716.0,698.2 721.0,695.6 724.9,694.6 730.9,693.2 736.8,688.6 739.8,687.6 743.8,679.7 747.8,667.8 752.7,653.5 755.7,652.3 759.7,654.3 762.3,651.3 765.6,658.9 770.6,669.8 774.0,676.7 778.5,666.8 782.5,655.5 786.5,655.9 792.4,654.3 795.4,658.3 799.4,660.4 803.3,653.9 809.3,646.4 813.3,647.5 817.2,652.3 822.2,656.3 827.2,653.5 832.1,655.9 838.1,649.9 843.1,649.9 846.0,657.9 851.0,664.4 855.0,659.9 858.9,654.9 862.9,652.9 866.9,657.5 872.8,666.8 876.8,656.9 880.9,646.9 883.9,647.9 889.9,651.3 895.8,648.3 900.8,651.9 905.7,659.9 909.7,660.8 914.7,659.5 917.6,665.8 921.6,681.7 925.6,693.2 928.6,692.2 931.5,690.6 937.5,688.6 942.5,694.6 947.4,695.6 953.4,694.6 959.3,687.6 963.3,680.7 967.3,674.7 971.3,675.3 975.2,665.4 979.2,650.9 982.2,647.5 985.1,647.5 989.1,655.9 994.1,669.8 998.0,674.7 1002.0,669.8 1007.0,661.4 1011.0,663.8 1012.9,663.4 1016.9,677.7 1021.3,690.6 1024.9,675.7 1028.8,655.9 1031.8,652.3 1036.8,655.9 1040.7,649.9 1044.7,646.4 1050.7,647.5 1056.6,647.5 1060.6,653.9 1063.6,660.4 1067.5,658.9 1072.5,651.9 1076.5,649.3 1079.5,650.9 1083.4,658.9 1086.4,662.4 1090.4,657.9 1094.3,651.5 1097.3,652.9 1101.3,662.8 1106.2,672.8 1110.2,672.8 1116.2,665.4 1121.1,671.8 1125.1,684.7 1129.1,694.6 1132.1,694.6 1136.0,689.6 1140.0,689.6 1143.0,693.6 1147.0,681.7 1151.9,670.4 1154.9,676.7 1159.9,691.6 1163.9,689.6 1167.8,691.6 1170.0,688.6 1173.2,686.7 1177.0,679.3" fill="none" stroke="#f25c1c" stroke-width="1.1" stroke-linejoin="round"/>
<path d="M4 500.5H1494M4 553.5H1494M4 596.5H1494M4 641.5H1494M4 703.5H1414" stroke="#555" stroke-width="1" fill="none"/>
<path d="M1414.5 40V704" stroke="#555" stroke-width="1" fill="none"/>
<path d="M1415 44.5h3M1415 86.5h3M1415 133.5h3M1415 185.5h3M1415 214.5h3M1415 245.5h3M1415 278.5h3M1415 315.5h3M1415 345.5h3M1415 376.5h3M1415 411.5h3M1415 448.5h3M1415 481.5h3M1415 524.5h3M1415 551.5h3M1415 578.5h3M1415 618.5h3M1415 645.5h3M1415 697.5h3" stroke="#555" stroke-width="1" fill="none"/>
<path d="M43.5 704v3.2M146.5 704v3.2M258.5 704v3.2M368.5 704v3.2M480.5 704v3.2M593.5 704v3.2M703.5 704v3.2M805.5 704v3.2M917.5 704v3.2M1030.5 704v3.2M1143.5 704v3.2M1252.5 704v3.2M1368.5 704v3.2" stroke="#555" stroke-width="1" fill="none"/>
<text x="43.2" y="718" text-anchor="middle" font-family="Liberation Sans" font-size="11" font-weight="bold" fill="#333">2015</text>
<text x="146.0" y="718" text-anchor="middle" font-family="Liberation Sans" font-size="11"  fill="#333">Mar</text>
<text x="258.0" y="718" text-anchor="middle" font-family="Liberation Sans" font-size="11"  fill="#333">May</text>
<text x="367.9" y="718" text-anchor="middle" font-family="Liberation Sans" font-size="11"  fill="#333">Jul</text>
<text x="480.1" y="718" text-anchor="middle" font-family="Liberation Sans" font-size="11"  fill="#333">Sep</text>
<text x="593.0" y="718" text-anchor="middle" font-family="Liberation Sans" font-size="11"  fill="#333">Nov</text>
<text x="702.6" y="718" text-anchor="middle" font-family="Liberation Sans" font-size="11" font-weight="bold" fill="#333">2016</text>
<text x="805.2" y="718" text-anchor="middle" font-family="Liberation Sans" font-size="11"  fill="#333">Mar</text>
<text x="916.8" y="718" text-anchor="middle" font-family="Liberation Sans" font-size="11"  fill="#333">May</text>
<text x="1029.9" y="718" text-anchor="middle" font-family="Liberation Sans" font-size="11"  fill="#333">Jul</text>
<text x="1143.0" y="718" text-anchor="middle" font-family="Liberation Sans" font-size="11"  fill="#333">Sep</text>
<text x="1251.9" y="718" text-anchor="middle" font-family="Liberation Sans" font-size="11"  fill="#333">Nov</text>
<text x="1367.7" y="718" text-anchor="middle" font-family="Liberation Sans" font-size="11" font-weight="bold" fill="#333">2017</text>
<text x="1421" y="48.6" font-family="Liberation Sans" font-size="11" fill="#333">42.00</text>
<text x="1421" y="90.6" font-family="Liberation Sans" font-size="11" fill="#333">38.00</text>
<text x="1421" y="137.6" font-family="Liberation Sans" font-size="11" fill="#333">34.00</text>
<text x="1421" y="189.6" font-family="Liberation Sans" font-size="11" fill="#333">30.00</text>
<text x="1421" y="218.6" font-family="Liberation Sans" font-size="11" fill="#333">28.00</text>
<text x="1421" y="249.6" font-family="Liberation Sans" font-size="11" fill="#333">26.00</text>
<text x="1421" y="282.6" font-family="Liberation Sans" font-size="11" fill="#333">24.00</text>
<text x="1421" y="319.6" font-family="Liberation Sans" font-size="11" fill="#333">22.00</text>
<text x="1421" y="349.6" font-family="Liberation Sans" font-size="11" fill="#333">20.50</text>
<text x="1421" y="380.6" font-family="Liberation Sans" font-size="11" fill="#333">19.00</text>
<text x="1421" y="415.6" font-family="Liberation Sans" font-size="11" fill="#333">17.50</text>
<text x="1421" y="452.6" font-family="Liberation Sans" font-size="11" fill="#333">16.00</text>
<text x="1421" y="485.6" font-family="Liberation Sans" font-size="11" fill="#333">14.80</text>
<text x="1421" y="528.6" font-family="Liberation Sans" font-size="11" fill="#333">50.0000</text>
<text x="1421" y="582.6" font-family="Liberation Sans" font-size="11" fill="#333">2000000.0000</text>
<text x="1421" y="622.6" font-family="Liberation Sans" font-size="11" fill="#333">0.0000</text>
<text x="1421" y="649.6" font-family="Liberation Sans" font-size="11" fill="#333">100.0000</text>
<text x="1421" y="701.6" font-family="Liberation Sans" font-size="11" fill="#333">0.0000</text>
<clipPath id="c1"><rect x="1415" y="540" width="79" height="13"/></clipPath>
<text clip-path="url(#c1)" x="1421" y="555.6" font-family="Liberation Sans" font-size="11" fill="#333">0.0000</text>
<rect x="1414" y="186" width="38" height="16" fill="#3d78d8"/><path d="M1414.500 193.500h2.500" stroke="#fff" stroke-width="1"/>
<text x="1421" y="197.6" font-family="Liberation Sans" font-size="11" fill="#fff" stroke="#fff" stroke-width="0.3">29.45</text></svg><div class="abs" style="left:9px;top:52px;width:13px;height:13px;border:1px solid #444;border-radius:2px;background:#fff"><div class="abs" style="left:1.500px;top:5px;width:8px;height:1px;background:#333"></div></div><div class="abs" id="title" style="left:28.500px;top:50px;font-size:16px;line-height:20px;color:#111;white-space:nowrap;letter-spacing:-0.510px;-webkit-text-stroke:0.250px #111">VANECK VECTORS STEEL ETF, D, BATS</div><div class="ltri" style="left:320.500px;top:57px;border-top-color:#c9c9c9"></div><div class="lb" style="left:338px;top:51.500px"><svg width="14" height="14" viewBox="0 0 14 14"><path d="M1.500 7Q4 2.700 7 2.700Q10 2.700 12.500 7Q10 11.300 7 11.300Q4 11.300 1.500 7Z" fill="#fff"/><circle cx="7" cy="7" r="3.100" fill="#999"/><circle cx="7" cy="7" r="1.300" fill="#fff"/></svg></div><div class="lb" style="left:355px;top:51.500px"><svg width="14" height="14" viewBox="-7 -7 14 14"><g fill="#fff"><rect x="-1" y="-5.400" width="2" height="3" transform="rotate(0)"/><rect x="-1" y="-5.400" width="2" height="3" transform="rotate(45)"/><rect x="-1" y="-5.400" width="2" height="3" transform="rotate(90)"/><rect x="-1" y="-5.400" width="2" height="3" transform="rotate(135)"/><rect x="-1" y="-5.400" width="2" height="3" transform="rotate(180)"/><rect x="-1" y="-5.400" width="2" height="3" transform="rotate(225)"/><rect x="-1" y="-5.400" width="2" height="3" transform="rotate(270)"/><rect x="-1" y="-5.400" width="2" height="3" transform="rotate(315)"/></g><circle r="2.950" fill="none" stroke="#fff" stroke-width="1.900"/></svg></div><div class="abs" style="left:377px;top:52px;font-size:11px;line-height:14px;color:#333;white-space:nowrap">O</div><div class="abs" style="left:390px;top:52px;font-size:11px;line-height:14px;color:#3c78d8;white-space:nowrap">29.19</div><div class="abs" style="left:423.3px;top:52px;font-size:11px;line-height:14px;color:#333;white-space:nowrap">H</div><div class="abs" style="left:435.9px;top:52px;font-size:11px;line-height:14px;color:#3c78d8;white-space:nowrap">29.74</div><div class="abs" style="left:470px;top:52px;font-size:11px;line-height:14px;color:#333;white-space:nowrap">L</div><div class="abs" style="left:480.2px;top:52px;font-size:11px;line-height:14px;color:#3c78d8;white-space:nowrap">29.19</div><div class="abs" style="left:512.9px;top:52px;font-size:11px;line-height:14px;color:#333;white-space:nowrap">C</div><div class="abs" style="left:525.2px;top:52px;font-size:11px;line-height:14px;color:#3c78d8;white-space:nowrap">29.45</div><div class="lg" style="left:9.5px;top:72px;color:rgba(0,0,0,.17);font-size:11px;letter-spacing:-0.7px">EMA</div><div class="ltri" style="left:36px;top:77px;border-top-color:#c9c9c9"></div><div class="lb on" style="left:53px;top:72px"><svg width="14" height="14" viewBox="0 0 14 14"><path d="M1.500 7Q4 2.700 7 2.700Q10 2.700 12.500 7Q10 11.300 7 11.300Q4 11.300 1.500 7Z" fill="#fff"/><circle cx="7" cy="7" r="3.100" fill="#4a86d9"/><circle cx="7" cy="7" r="1.300" fill="#fff"/></svg></div><div class="lb" style="left:70px;top:72px"><svg width="14" height="14" viewBox="-7 -7 14 14"><g fill="#fff"><rect x="-1" y="-5.400" width="2" height="3" transform="rotate(0)"/><rect x="-1" y="-5.400" width="2" height="3" transform="rotate(45)"/><rect x="-1" y="-5.400" width="2" height="3" transform="rotate(90)"/><rect x="-1" y="-5.400" width="2" height="3" transform="rotate(135)"/><rect x="-1" y="-5.400" width="2" height="3" transform="rotate(180)"/><rect x="-1" y="-5.400" width="2" height="3" transform="rotate(225)"/><rect x="-1" y="-5.400" width="2" height="3" transform="rotate(270)"/><rect x="-1" y="-5.400" width="2" height="3" transform="rotate(315)"/></g><circle r="2.950" fill="none" stroke="#fff" stroke-width="1.900"/></svg></div><div class="lb" style="left:87px;top:72px"><svg width="14" height="14" viewBox="0 0 14 14"><path d="M7 3v8M3 7h8" stroke="#fff" stroke-width="2.100" fill="none"/></svg></div><div class="lb" style="left:104px;top:72px"><svg width="14" height="14" viewBox="0 0 14 14"><path d="M2.500 2.500l9 9M11.500 2.500l-9 9" stroke="#fff" stroke-width="1.550" fill="none"/></svg></div><div class="lg" style="left:9.5px;top:92px;color:rgba(0,0,0,.17);font-size:11px;letter-spacing:-0.7px">EMA</div><div class="ltri" style="left:36px;top:97px;border-top-color:#c9c9c9"></div><div class="lb on" style="left:53px;top:92px"><svg width="14" height="14" viewBox="0 0 14 14"><path d="M1.500 7Q4 2.700 7 2.700Q10 2.700 12.500 7Q10 11.300 7 11.300Q4 11.300 1.500 7Z" fill="#fff"/><circle cx="7" cy="7" r="3.100" fill="#4a86d9"/><circle cx="7" cy="7" r="1.300" fill="#fff"/></svg></div><div class="lb" style="left:70px;top:92px"><svg width="14" height="14" viewBox="-7 -7 14 14"><g fill="#fff"><rect x="-1" y="-5.400" width="2" height="3" transform="rotate(0)"/><rect x="-1" y="-5.400" width="2" height="3" transform="rotate(45)"/><rect x="-1" y="-5.400" width="2" height="3" transform="rotate(90)"/><rect x="-1" y="-5.400" width="2" height="3" transform="rotate(135)"/><rect x="-1" y="-5.400" width="2" height="3" transform="rotate(180)"/><rect x="-1" y="-5.400" width="2" height="3" transform="rotate(225)"/><rect x="-1" y="-5.400" width="2" height="3" transform="rotate(270)"/><rect x="-1" y="-5.400" width="2" height="3" transform="rotate(315)"/></g><circle r="2.950" fill="none" stroke="#fff" stroke-width="1.900"/></svg></div><div class="lb" style="left:87px;top:92px"><svg width="14" height="14" viewBox="0 0 14 14"><path d="M7 3v8M3 7h8" stroke="#fff" stroke-width="2.100" fill="none"/></svg></div><div class="lb" style="left:104px;top:92px"><svg width="14" height="14" viewBox="0 0 14 14"><path d="M2.500 2.500l9 9M11.500 2.500l-9 9" stroke="#fff" stroke-width="1.550" fill="none"/></svg></div><div class="lg" style="left:9.5px;top:112px;color:rgba(0,0,0,.17);font-size:11px;letter-spacing:-0.7px">EMA</div><div class="ltri" style="left:36px;top:117px;border-top-color:#c9c9c9"></div><div class="lb on" style="left:53px;top:112px"><svg width="14" height="14" viewBox="0 0 14 14"><path d="M1.500 7Q4 2.700 7 2.700Q10 2.700 12.500 7Q10 11.300 7 11.300Q4 11.300 1.500 7Z" fill="#fff"/><circle cx="7" cy="7" r="3.100" fill="#4a86d9"/><circle cx="7" cy="7" r="1.300" fill="#fff"/></svg></div><div class="lb" style="left:70px;top:112px"><svg width="14" height="14" viewBox="-7 -7 14 14"><g fill="#fff"><rect x="-1" y="-5.400" width="2" height="3" transform="rotate(0)"/><rect x="-1" y="-5.400" width="2" height="3" transform="rotate(45)"/><rect x="-1" y="-5.400" width="2" height="3" transform="rotate(90)"/><rect x="-1" y="-5.400" width="2" height="3" transform="rotate(135)"/><rect x="-1" y="-5.400" width="2" height="3" transform="rotate(180)"/><rect x="-1" y="-5.400" width="2" height="3" transform="rotate(225)"/><rect x="-1" y="-5.400" width="2" height="3" transform="rotate(270)"/><rect x="-1" y="-5.400" width="2" height="3" transform="rotate(315)"/></g><circle r="2.950" fill="none" stroke="#fff" stroke-width="1.900"/></svg></div><div class="lb" style="left:87px;top:112px"><svg width="14" height="14" viewBox="0 0 14 14"><path d="M7 3v8M3 7h8" stroke="#fff" stroke-width="2.100" fill="none"/></svg></div><div class="lb" style="left:104px;top:112px"><svg width="14" height="14" viewBox="0 0 14 14"><path d="M2.500 2.500l9 9M11.500 2.500l-9 9" stroke="#fff" stroke-width="1.550" fill="none"/></svg></div><div class="lg" style="left:9.5px;top:132px;color:rgba(0,0,0,.17);font-size:11px;letter-spacing:0px">BB</div><div class="ltri" style="left:27px;top:137px;border-top-color:#c9c9c9"></div><div class="lb on" style="left:45px;top:132px"><svg width="14" height="14" viewBox="0 0 14 14"><path d="M1.500 7Q4 2.700 7 2.700Q10 2.700 12.500 7Q10 11.300 7 11.300Q4 11.300 1.500 7Z" fill="#fff"/><circle cx="7" cy="7" r="3.100" fill="#4a86d9"/><circle cx="7" cy="7" r="1.300" fill="#fff"/></svg></div><div class="lb" style="left:62px;top:132px"><svg width="14" height="14" viewBox="-7 -7 14 14"><g fill="#fff"><rect x="-1" y="-5.400" width="2" height="3" transform="rotate(0)"/><rect x="-1" y="-5.400" width="2" height="3" transform="rotate(45)"/><rect x="-1" y="-5.400" width="2" height="3" transform="rotate(90)"/><rect x="-1" y="-5.400" width="2" height="3" transform="rotate(135)"/><rect x="-1" y="-5.400" width="2" height="3" transform="rotate(180)"/><rect x="-1" y="-5.400" width="2" height="3" transform="rotate(225)"/><rect x="-1" y="-5.400" width="2" height="3" transform="rotate(270)"/><rect x="-1" y="-5.400" width="2" height="3" transform="rotate(315)"/></g><circle r="2.950" fill="none" stroke="#fff" stroke-width="1.900"/></svg></div><div class="lb" style="left:79px;top:132px"><svg width="14" height="14" viewBox="0 0 14 14"><path d="M7 3v8M3 7h8" stroke="#fff" stroke-width="2.100" fill="none"/></svg></div><div class="lb" style="left:96px;top:132px"><svg width="14" height="14" viewBox="0 0 14 14"><path d="M2.500 2.500l9 9M11.500 2.500l-9 9" stroke="#fff" stroke-width="1.550" fill="none"/></svg></div><div class="lg" style="left:9.5px;top:152px;color:#333;font-size:11.5px;letter-spacing:0px">Vol</div><div class="ltri" style="left:30.5px;top:157px;border-top-color:#c9c9c9"></div><div class="lb" style="left:48px;top:152px"><svg width="14" height="14" viewBox="0 0 14 14"><path d="M1.500 7Q4 2.700 7 2.700Q10 2.700 12.500 7Q10 11.300 7 11.300Q4 11.300 1.500 7Z" fill="#fff"/><circle cx="7" cy="7" r="3.100" fill="#999"/><circle cx="7" cy="7" r="1.300" fill="#fff"/></svg></div><div class="lb" style="left:65px;top:152px"><svg width="14" height="14" viewBox="-7 -7 14 14"><g fill="#fff"><rect x="-1" y="-5.400" width="2" height="3" transform="rotate(0)"/><rect x="-1" y="-5.400" width="2" height="3" transform="rotate(45)"/><rect x="-1" y="-5.400" width="2" height="3" transform="rotate(90)"/><rect x="-1" y="-5.400" width="2" height="3" transform="rotate(135)"/><rect x="-1" y="-5.400" width="2" height="3" transform="rotate(180)"/><rect x="-1" y="-5.400" width="2" height="3" transform="rotate(225)"/><rect x="-1" y="-5.400" width="2" height="3" transform="rotate(270)"/><rect x="-1" y="-5.400" width="2" height="3" transform="rotate(315)"/></g><circle r="2.950" fill="none" stroke="#fff" stroke-width="1.900"/></svg></div><div class="lb" style="left:82px;top:152px"><svg width="14" height="14" viewBox="0 0 14 14"><path d="M7 3v8M3 7h8" stroke="#fff" stroke-width="2.100" fill="none"/></svg></div><div class="lb" style="left:99px;top:152px"><svg width="14" height="14" viewBox="0 0 14 14"><path d="M2.500 2.500l9 9M11.500 2.500l-9 9" stroke="#fff" stroke-width="1.550" fill="none"/></svg></div><div class="lg" style="left:121px;top:152px;color:#c6e4c6;font-size:11px;letter-spacing:.1px">60.661K</div><div class="lg" style="left:167px;top:152px;color:#22a7f2;font-size:11px;letter-spacing:.1px">47.087K</div><div class="lg" style="left:9.5px;top:173px;color:rgba(0,0,0,.17);font-size:11px;letter-spacing:-0.5px">SAR</div><div class="ltri" style="left:33.5px;top:178px;border-top-color:#c9c9c9"></div><div class="lb on" style="left:51px;top:173px"><svg width="14" height="14" viewBox="0 0 14 14"><path d="M1.500 7Q4 2.700 7 2.700Q10 2.700 12.500 7Q10 11.300 7 11.300Q4 11.300 1.500 7Z" fill="#fff"/><circle cx="7" cy="7" r="3.100" fill="#4a86d9"/><circle cx="7" cy="7" r="1.300" fill="#fff"/></svg></div><div class="lb" style="left:68px;top:173px"><svg width="14" height="14" viewBox="-7 -7 14 14"><g fill="#fff"><rect x="-1" y="-5.400" width="2" height="3" transform="rotate(0)"/><rect x="-1" y="-5.400" width="2" height="3" transform="rotate(45)"/><rect x="-1" y="-5.400" width="2" height="3" transform="rotate(90)"/><rect x="-1" y="-5.400" width="2" height="3" transform="rotate(135)"/><rect x="-1" y="-5.400" width="2" height="3" transform="rotate(180)"/><rect x="-1" y="-5.400" width="2" height="3" transform="rotate(225)"/><rect x="-1" y="-5.400" width="2" height="3" transform="rotate(270)"/><rect x="-1" y="-5.400" width="2" height="3" transform="rotate(315)"/></g><circle r="2.950" fill="none" stroke="#fff" stroke-width="1.900"/></svg></div><div class="lb" style="left:85px;top:173px"><svg width="14" height="14" viewBox="0 0 14 14"><path d="M7 3v8M3 7h8" stroke="#fff" stroke-width="2.100" fill="none"/></svg></div><div class="lb" style="left:102px;top:173px"><svg width="14" height="14" viewBox="0 0 14 14"><path d="M2.500 2.500l9 9M11.500 2.500l-9 9" stroke="#fff" stroke-width="1.550" fill="none"/></svg></div><div class="lg" style="left:9px;top:509px;color:#333;font-size:11.500px;letter-spacing:-0.2px">MFI</div><div class="ltri" style="left:32px;top:514px;border-top-color:#c9c9c9"></div><div class="lb" style="left:49.5px;top:509px"><svg width="14" height="14" viewBox="0 0 14 14"><path d="M1.500 7Q4 2.700 7 2.700Q10 2.700 12.500 7Q10 11.300 7 11.300Q4 11.300 1.500 7Z" fill="#fff"/><circle cx="7" cy="7" r="3.100" fill="#999"/><circle cx="7" cy="7" r="1.300" fill="#fff"/></svg></div><div class="lb" style="left:66.5px;top:509px"><svg width="14" height="14" viewBox="-7 -7 14 14"><g fill="#fff"><rect x="-1" y="-5.400" width="2" height="3" transform="rotate(0)"/><rect x="-1" y="-5.400" width="2" height="3" transform="rotate(45)"/><rect x="-1" y="-5.400" width="2" height="3" transform="rotate(90)"/><rect x="-1" y="-5.400" width="2" height="3" transform="rotate(135)"/><rect x="-1" y="-5.400" width="2" height="3" transform="rotate(180)"/><rect x="-1" y="-5.400" width="2" height="3" transform="rotate(225)"/><rect x="-1" y="-5.400" width="2" height="3" transform="rotate(270)"/><rect x="-1" y="-5.400" width="2" height="3" transform="rotate(315)"/></g><circle r="2.950" fill="none" stroke="#fff" stroke-width="1.900"/></svg></div><div class="lb" style="left:83.5px;top:509px"><svg width="14" height="14" viewBox="0 0 14 14"><path d="M7 3v8M3 7h8" stroke="#fff" stroke-width="2.100" fill="none"/></svg></div><div class="lb" style="left:100.5px;top:509px"><svg width="14" height="14" viewBox="0 0 14 14"><path d="M2.500 2.500l9 9M11.500 2.500l-9 9" stroke="#fff" stroke-width="1.550" fill="none"/></svg></div><div class="lg" style="left:123.4px;top:509px;color:#4f9e22;font-size:11px">39.1851</div><div class="lg" style="left:9px;top:562px;color:#333;font-size:11.500px;letter-spacing:-1.0px">OBV</div><div class="ltri" style="left:35px;top:567px;border-top-color:#c9c9c9"></div><div class="lb" style="left:52.5px;top:562px"><svg width="14" height="14" viewBox="0 0 14 14"><path d="M1.500 7Q4 2.700 7 2.700Q10 2.700 12.500 7Q10 11.300 7 11.300Q4 11.300 1.500 7Z" fill="#fff"/><circle cx="7" cy="7" r="3.100" fill="#999"/><circle cx="7" cy="7" r="1.300" fill="#fff"/></svg></div><div class="lb" style="left:69.5px;top:562px"><svg width="14" height="14" viewBox="-7 -7 14 14"><g fill="#fff"><rect x="-1" y="-5.400" width="2" height="3" transform="rotate(0)"/><rect x="-1" y="-5.400" width="2" height="3" transform="rotate(45)"/><rect x="-1" y="-5.400" width="2" height="3" transform="rotate(90)"/><rect x="-1" y="-5.400" width="2" height="3" transform="rotate(135)"/><rect x="-1" y="-5.400" width="2" height="3" transform="rotate(180)"/><rect x="-1" y="-5.400" width="2" height="3" transform="rotate(225)"/><rect x="-1" y="-5.400" width="2" height="3" transform="rotate(270)"/><rect x="-1" y="-5.400" width="2" height="3" transform="rotate(315)"/></g><circle r="2.950" fill="none" stroke="#fff" stroke-width="1.900"/></svg></div><div class="lb" style="left:86.5px;top:562px"><svg width="14" height="14" viewBox="0 0 14 14"><path d="M7 3v8M3 7h8" stroke="#fff" stroke-width="2.100" fill="none"/></svg></div><div class="lb" style="left:103.5px;top:562px"><svg width="14" height="14" viewBox="0 0 14 14"><path d="M2.500 2.500l9 9M11.500 2.500l-9 9" stroke="#fff" stroke-width="1.550" fill="none"/></svg></div><div class="lg" style="left:126px;top:562px;color:#3a6ca8;font-size:11px">2525021.0000</div><div class="lg" style="left:9px;top:605px;color:#333;font-size:11.500px;letter-spacing:-1.1px">MACD</div><div class="ltri" style="left:43px;top:610px;border-top-color:#c9c9c9"></div><div class="lb" style="left:60.5px;top:605px"><svg width="14" height="14" viewBox="0 0 14 14"><path d="M1.500 7Q4 2.700 7 2.700Q10 2.700 12.500 7Q10 11.300 7 11.300Q4 11.300 1.500 7Z" fill="#fff"/><circle cx="7" cy="7" r="3.100" fill="#999"/><circle cx="7" cy="7" r="1.300" fill="#fff"/></svg></div><div class="lb" style="left:77.5px;top:605px"><svg width="14" height="14" viewBox="-7 -7 14 14"><g fill="#fff"><rect x="-1" y="-5.400" width="2" height="3" transform="rotate(0)"/><rect x="-1" y="-5.400" width="2" height="3" transform="rotate(45)"/><rect x="-1" y="-5.400" width="2" height="3" transform="rotate(90)"/><rect x="-1" y="-5.400" width="2" height="3" transform="rotate(135)"/><rect x="-1" y="-5.400" width="2" height="3" transform="rotate(180)"/><rect x="-1" y="-5.400" width="2" height="3" transform="rotate(225)"/><rect x="-1" y="-5.400" width="2" height="3" transform="rotate(270)"/><rect x="-1" y="-5.400" width="2" height="3" transform="rotate(315)"/></g><circle r="2.950" fill="none" stroke="#fff" stroke-width="1.900"/></svg></div><div class="lb" style="left:94.5px;top:605px"><svg width="14" height="14" viewBox="0 0 14 14"><path d="M7 3v8M3 7h8" stroke="#fff" stroke-width="2.100" fill="none"/></svg></div><div class="lb" style="left:111.5px;top:605px"><svg width="14" height="14" viewBox="0 0 14 14"><path d="M2.500 2.500l9 9M11.500 2.500l-9 9" stroke="#fff" stroke-width="1.550" fill="none"/></svg></div><div class="lg" style="left:134.4px;top:605px;color:#ff1a7a;font-size:11px">-0.0762</div><div class="lg" style="left:177.5px;top:605px;color:#1a9bfc;font-size:11px">-0.5801</div><div class="lg" style="left:220.3px;top:605px;color:#f88414;font-size:11px">-0.5039</div><div class="lg" style="left:9px;top:650px;color:#333;font-size:11.500px;letter-spacing:0px">Stoch</div><div class="ltri" style="left:43px;top:655px;border-top-color:#c9c9c9"></div><div class="lb" style="left:60.5px;top:650px"><svg width="14" height="14" viewBox="0 0 14 14"><path d="M1.500 7Q4 2.700 7 2.700Q10 2.700 12.500 7Q10 11.300 7 11.300Q4 11.300 1.500 7Z" fill="#fff"/><circle cx="7" cy="7" r="3.100" fill="#999"/><circle cx="7" cy="7" r="1.300" fill="#fff"/></svg></div><div class="lb" style="left:77.5px;top:650px"><svg width="14" height="14" viewBox="-7 -7 14 14"><g fill="#fff"><rect x="-1" y="-5.400" width="2" height="3" transform="rotate(0)"/><rect x="-1" y="-5.400" width="2" height="3" transform="rotate(45)"/><rect x="-1" y="-5.400" width="2" height="3" transform="rotate(90)"/><rect x="-1" y="-5.400" width="2" height="3" transform="rotate(135)"/><rect x="-1" y="-5.400" width="2" height="3" transform="rotate(180)"/><rect x="-1" y="-5.400" width="2" height="3" transform="rotate(225)"/><rect x="-1" y="-5.400" width="2" height="3" transform="rotate(270)"/><rect x="-1" y="-5.400" width="2" height="3" transform="rotate(315)"/></g><circle r="2.950" fill="none" stroke="#fff" stroke-width="1.900"/></svg></div><div class="lb" style="left:94.5px;top:650px"><svg width="14" height="14" viewBox="0 0 14 14"><path d="M7 3v8M3 7h8" stroke="#fff" stroke-width="2.100" fill="none"/></svg></div><div class="lb" style="left:111.5px;top:650px"><svg width="14" height="14" viewBox="0 0 14 14"><path d="M2.500 2.500l9 9M11.500 2.500l-9 9" stroke="#fff" stroke-width="1.550" fill="none"/></svg></div><div class="lg" style="left:133.8px;top:650px;color:#1a9bfc;font-size:11px">51.7647</div><div class="lg" style="left:179.7px;top:650px;color:#f25c1c;font-size:11px">36.2745</div><div class="abs" style="left:636px;top:51px;width:302px;height:41px;background:#fff;border:1px solid #cfcfcf;box-shadow:0 0 6px rgba(0,0,0,.16)"><div class="abs" style="left:7.300px;top:6.500px;width:2px;height:2px;background:#adadad;box-shadow:4px 0 0 #adadad,0 4px 0 #adadad,4px 4px 0 #adadad,0 8px 0 #adadad,4px 8px 0 #adadad,0 12px 0 #adadad,4px 12px 0 #adadad,0 16px 0 #adadad,4px 16px 0 #adadad,0 20px 0 #adadad,4px 20px 0 #adadad,0 24px 0 #adadad,4px 24px 0 #adadad"></div><div class="abs" style="left:20px;top:0;width:90px;height:39px;background:#fcefec;border-left:1px solid #cfcfcf;border-right:1px solid #cfcfcf"><div class="abs" style="left:3.400px;top:5.700px;font-size:9px;line-height:10px;color:#e0654d;font-weight:bold;letter-spacing:-0.250px">SELL</div><div class="abs" style="left:3.400px;top:16.600px;font-size:13.800px;line-height:18px;color:#111;white-space:nowrap;letter-spacing:-0.300px">29.4<span style="color:#2f8f5b">3</span></div></div><div class="abs" style="left:109px;top:0;width:48px;height:39px;text-align:center;font-size:13.800px;line-height:40px;color:#9a9a9a;letter-spacing:-0.300px">0.07</div><div class="abs" style="left:157px;top:0;width:90px;height:39px;background:#eaf2fc;border-left:1px solid #cfcfcf;border-right:1px solid #cfcfcf"><div class="abs" style="left:3.400px;top:5.700px;font-size:9px;line-height:10px;color:#4a7fc9;font-weight:bold;letter-spacing:-0.250px">BUY</div><div class="abs" style="left:3.400px;top:16.600px;font-size:13.800px;line-height:18px;color:#111;white-space:nowrap;letter-spacing:-0.300px">29.<span style="color:#2f8f5b">50</span></div></div><div class="abs" style="left:253.500px;top:8.500px;width:21px;height:21px;border:2px solid #f5a45f;border-radius:50%"></div><div class="abs" style="left:263px;top:13.500px;width:2px;height:2px;background:#f4a666;box-shadow:0 3.500px 0 #f4a666,0 5px 0 #f4a666,0 7px 0 #f4a666,0 9px 0 #f4a666"></div><div class="abs" style="left:281px;top:0;width:1px;height:39px;background:#cfcfcf"></div><div class="abs" style="left:281px;top:19.500px;width:20px;height:1px;background:#cfcfcf"></div><div class="abs" style="left:287px;top:9px;width:9px;height:2px;background:#3b9b5c"></div><div class="abs" style="left:290.500px;top:5.500px;width:2px;height:9px;background:#3b9b5c"></div><div class="abs" style="left:287px;top:29.500px;width:9px;height:2px;background:#d9534f"></div></div><div class="abs" style="left:1335px;top:51px;width:15px;height:15px;border:2px solid #f57c00;border-radius:50%"></div><div class="abs" style="left:1341.700px;top:54.500px;width:1.600px;height:5px;background:#f57c00"></div><div class="abs" style="left:1341.700px;top:60.700px;width:1.600px;height:1.600px;background:#f57c00"></div><div class="abs" style="left:1356px;top:54.500px;width:8px;height:8px;border-radius:50%;background:#2e8b57"></div><div class="abs" style="left:1368.500px;top:51px;font-size:11.500px;line-height:14px;color:#3a9464">realtime</div></div></body></html>
